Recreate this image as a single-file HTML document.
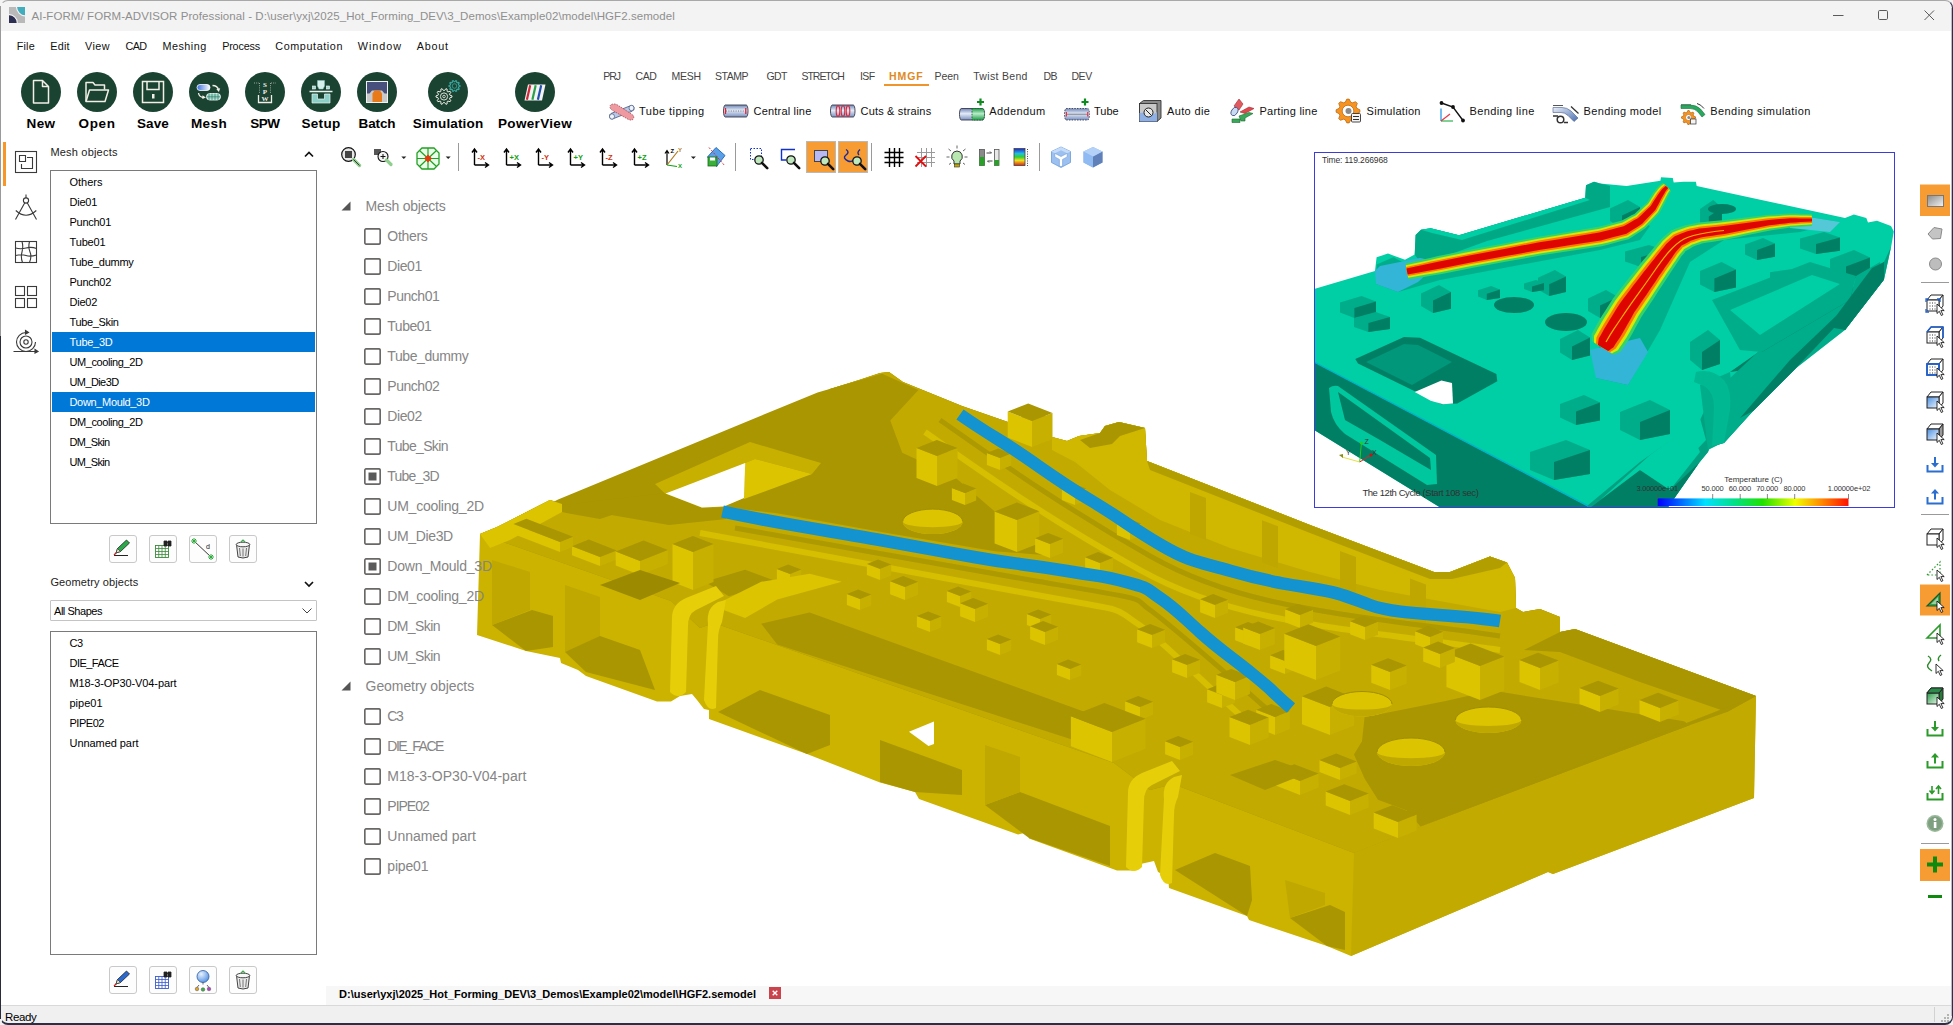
<!DOCTYPE html>
<html lang="en"><head><meta charset="utf-8"><title>AI-FORM/ FORM-ADVISOR Professional</title>
<style>
html,body{margin:0;padding:0}
body{width:1953px;height:1025px;overflow:hidden;background:#fff;font-family:"Liberation Sans",sans-serif;position:relative}
#app{position:absolute;left:0;top:0;width:1953px;height:1025px;overflow:hidden;background:#fff}
.bigc{position:absolute;width:40px;height:40px;border-radius:50%;background:#1b4332}
.lb{position:absolute;border:1px solid #7a7a7a;background:#fff}
.sb{position:absolute;width:25.5px;height:25.5px;border:1px solid #c9c9c9;border-radius:3px;background:#fdfdfd}
</style></head>
<body><div id="app">
<!-- sec_top -->
<div id="titlebar" style="position:absolute;left:0;top:0;width:1953px;height:31px;background:#f3f3f3"></div>
<svg style="position:absolute;left:9px;top:7px" width="16" height="16" viewBox="0 0 16 16">
<rect x="0" y="0" width="16" height="16" fill="#b9b9b9"/>
<path d="M7.500 -1H17V9A9.500 9.500 0 0 1 7.500 -1Z" fill="#41adbd" stroke="#f3f3f3" stroke-width="1.200"/>
<path d="M-1 7.800A8.200 8.200 0 0 1 8.200 17H-1Z" fill="#2c2f52" stroke="#f3f3f3" stroke-width="1.200"/>
</svg>
<span style="position:absolute;left:31.4px;top:11.27px;font-size:11.5px;line-height:11.5px;color:#8f8f8f;letter-spacing:0.078px;white-space:pre;">AI-FORM/ FORM-ADVISOR Professional - D:\user\yxj\2025_Hot_Forming_DEV\3_Demos\Example02\model\HGF2.semodel</span>
<svg style="position:absolute;left:1820px;top:0" width="133" height="31" viewBox="0 0 133 31" fill="none" stroke="#5a5a5a" stroke-width="1">
<path d="M13 15.5H23.5"/>
<rect x="58.5" y="10.5" width="9" height="9" rx="1.2"/>
<path d="M104.5 10.5L114 20M114 10.5L104.5 20"/>
</svg>
<span style="position:absolute;left:16.8px;top:40.76px;font-size:10.8px;line-height:10.8px;color:#111;letter-spacing:0.149px;white-space:pre;">File</span>
<span style="position:absolute;left:50.2px;top:40.76px;font-size:10.8px;line-height:10.8px;color:#111;letter-spacing:0.272px;white-space:pre;">Edit</span>
<span style="position:absolute;left:85.0px;top:40.76px;font-size:10.8px;line-height:10.8px;color:#111;letter-spacing:0.447px;white-space:pre;">View</span>
<span style="position:absolute;left:125.4px;top:40.76px;font-size:10.8px;line-height:10.8px;color:#111;letter-spacing:-0.534px;white-space:pre;">CAD</span>
<span style="position:absolute;left:162.4px;top:40.76px;font-size:10.8px;line-height:10.8px;color:#111;letter-spacing:0.511px;white-space:pre;">Meshing</span>
<span style="position:absolute;left:222.2px;top:40.76px;font-size:10.8px;line-height:10.8px;color:#111;letter-spacing:-0.188px;white-space:pre;">Process</span>
<span style="position:absolute;left:275.3px;top:40.76px;font-size:10.8px;line-height:10.8px;color:#111;letter-spacing:0.588px;white-space:pre;">Computation</span>
<span style="position:absolute;left:357.7px;top:40.76px;font-size:10.8px;line-height:10.8px;color:#111;letter-spacing:1.015px;white-space:pre;">Window</span>
<span style="position:absolute;left:416.8px;top:40.76px;font-size:10.8px;line-height:10.8px;color:#111;letter-spacing:0.735px;white-space:pre;">About</span>
<div class="bigc" style="left:21px;top:72px"></div>
<span style="position:absolute;left:26.6px;top:116.57px;font-size:13.5px;line-height:13.5px;font-weight:700;color:#000;letter-spacing:0.314px;white-space:pre;">New</span>
<div class="bigc" style="left:77px;top:72px"></div>
<span style="position:absolute;left:78.5px;top:116.57px;font-size:13.5px;line-height:13.5px;font-weight:700;color:#000;letter-spacing:0.625px;white-space:pre;">Open</span>
<div class="bigc" style="left:133px;top:72px"></div>
<span style="position:absolute;left:137.0px;top:116.57px;font-size:13.5px;line-height:13.5px;font-weight:700;color:#000;letter-spacing:0.118px;white-space:pre;">Save</span>
<div class="bigc" style="left:189px;top:72px"></div>
<span style="position:absolute;left:191.0px;top:116.57px;font-size:13.5px;line-height:13.5px;font-weight:700;color:#000;letter-spacing:0.373px;white-space:pre;">Mesh</span>
<div class="bigc" style="left:245px;top:72px"></div>
<span style="position:absolute;left:250.2px;top:116.57px;font-size:13.5px;line-height:13.5px;font-weight:700;color:#000;letter-spacing:-0.417px;white-space:pre;">SPW</span>
<div class="bigc" style="left:301px;top:72px"></div>
<span style="position:absolute;left:301.5px;top:116.57px;font-size:13.5px;line-height:13.5px;font-weight:700;color:#000;letter-spacing:0.300px;white-space:pre;">Setup</span>
<div class="bigc" style="left:357px;top:72px"></div>
<span style="position:absolute;left:358.5px;top:116.57px;font-size:13.5px;line-height:13.5px;font-weight:700;color:#000;letter-spacing:-0.102px;white-space:pre;">Batch</span>
<div class="bigc" style="left:428px;top:72px"></div>
<span style="position:absolute;left:412.8px;top:116.57px;font-size:13.5px;line-height:13.5px;font-weight:700;color:#000;letter-spacing:0.150px;white-space:pre;">Simulation</span>
<div class="bigc" style="left:515px;top:72px"></div>
<span style="position:absolute;left:498.0px;top:116.57px;font-size:13.5px;line-height:13.5px;font-weight:700;color:#000;letter-spacing:0.330px;white-space:pre;">PowerView</span>
<span style="position:absolute;left:603.3px;top:70.91px;font-size:10.5px;line-height:10.5px;color:#444;letter-spacing:-1.112px;white-space:pre;">PRJ</span>
<span style="position:absolute;left:635.6px;top:70.91px;font-size:10.5px;line-height:10.5px;color:#444;letter-spacing:-0.490px;white-space:pre;">CAD</span>
<span style="position:absolute;left:671.4px;top:70.91px;font-size:10.5px;line-height:10.5px;color:#444;letter-spacing:-0.234px;white-space:pre;">MESH</span>
<span style="position:absolute;left:715.1px;top:70.91px;font-size:10.5px;line-height:10.5px;color:#444;letter-spacing:-0.478px;white-space:pre;">STAMP</span>
<span style="position:absolute;left:766.4px;top:70.91px;font-size:10.5px;line-height:10.5px;color:#444;letter-spacing:-0.588px;white-space:pre;">GDT</span>
<span style="position:absolute;left:801.5px;top:70.91px;font-size:10.5px;line-height:10.5px;color:#444;letter-spacing:-1.040px;white-space:pre;">STRETCH</span>
<span style="position:absolute;left:859.9px;top:70.91px;font-size:10.5px;line-height:10.5px;color:#444;letter-spacing:-0.545px;white-space:pre;">ISF</span>
<span style="position:absolute;left:934.5px;top:70.91px;font-size:10.5px;line-height:10.5px;color:#444;letter-spacing:-0.031px;white-space:pre;">Peen</span>
<span style="position:absolute;left:973.2px;top:70.91px;font-size:10.5px;line-height:10.5px;color:#444;letter-spacing:0.314px;white-space:pre;">Twist Bend</span>
<span style="position:absolute;left:1043.4px;top:70.91px;font-size:10.5px;line-height:10.5px;color:#444;letter-spacing:-0.493px;white-space:pre;">DB</span>
<span style="position:absolute;left:1071.4px;top:70.91px;font-size:10.5px;line-height:10.5px;color:#444;letter-spacing:-0.397px;white-space:pre;">DEV</span>
<span style="position:absolute;left:889.0px;top:70.91px;font-size:10.5px;line-height:10.5px;font-weight:700;color:#e08a1e;letter-spacing:0.947px;white-space:pre;">HMGF</span>
<div style="position:absolute;left:884px;top:84px;width:45px;height:2px;background:#f0952b"></div>
<span style="position:absolute;left:639.1px;top:105.99px;font-size:11px;line-height:11px;color:#111;letter-spacing:0.455px;white-space:pre;">Tube tipping</span>
<span style="position:absolute;left:753.5px;top:105.99px;font-size:11px;line-height:11px;color:#111;letter-spacing:0.197px;white-space:pre;">Central line</span>
<span style="position:absolute;left:860.6px;top:105.99px;font-size:11px;line-height:11px;color:#111;letter-spacing:0.160px;white-space:pre;">Cuts &amp; strains</span>
<span style="position:absolute;left:989.3px;top:105.99px;font-size:11px;line-height:11px;color:#111;letter-spacing:0.387px;white-space:pre;">Addendum</span>
<span style="position:absolute;left:1094.0px;top:105.99px;font-size:11px;line-height:11px;color:#111;letter-spacing:0.009px;white-space:pre;">Tube</span>
<span style="position:absolute;left:1167.1px;top:105.99px;font-size:11px;line-height:11px;color:#111;letter-spacing:0.330px;white-space:pre;">Auto die</span>
<span style="position:absolute;left:1259.5px;top:105.99px;font-size:11px;line-height:11px;color:#111;letter-spacing:0.247px;white-space:pre;">Parting line</span>
<span style="position:absolute;left:1366.6px;top:105.99px;font-size:11px;line-height:11px;color:#111;letter-spacing:0.274px;white-space:pre;">Simulation</span>
<span style="position:absolute;left:1469.5px;top:105.99px;font-size:11px;line-height:11px;color:#111;letter-spacing:0.388px;white-space:pre;">Bending line</span>
<span style="position:absolute;left:1583.5px;top:105.99px;font-size:11px;line-height:11px;color:#111;letter-spacing:0.363px;white-space:pre;">Bending model</span>
<span style="position:absolute;left:1710.3px;top:105.99px;font-size:11px;line-height:11px;color:#111;letter-spacing:0.414px;white-space:pre;">Bending simulation</span>
<!-- sec_left -->
<div style="position:absolute;left:3px;top:142px;width:3px;height:44px;background:#f7972a"></div>
<svg style="position:absolute;left:12px;top:148px" width="30" height="212" viewBox="12 148 30 212" fill="none" stroke="#3a3a3a" stroke-width="1.1">
<rect x="15.5" y="151.5" width="21" height="21"/>
<path d="M19.5 155.5h6v6h-6z M27 157.5h5.5v11h-11v-4.5"/>
<circle cx="26" cy="200.5" r="2.6"/><path d="M26 194.5v3.4 M24.8 202.8L15.5 219.5 M27.2 202.8L36.5 219.5 M15.8 210.5Q26 220 36.3 210.5"/>
<rect x="15.5" y="241.5" width="21" height="21"/>
<path d="M22 241.5q1.5 5 0 10.500t0.500 10.500 M29.500 241.5q-1.500 6 0.500 10.500t-0.500 10.500 M15.5 248q5 1.500 10.500 0t10.500 0.500 M15.5 255.500q6 -1.500 10.500 0t10.500 -0.500"/>
<rect x="15.5" y="286.5" width="9" height="9"/><rect x="27.5" y="286.5" width="9" height="9"/><rect x="15.5" y="298.5" width="9" height="9"/><rect x="27.5" y="298.5" width="9" height="9"/>
<circle cx="26" cy="342" r="2.2"/><circle cx="26" cy="342" r="6"/><path d="M26 332.500a9.500 9.500 0 1 0 9.500 9.500 M13.5 351.5h23.500"/>
<path d="M25.500 330.500l3 2l-3 1.500z M35 349.500l3 2l-3 1.500z" fill="#3a3a3a"/>
</svg>
<span style="position:absolute;left:50.4px;top:146.69px;font-size:11px;line-height:11px;color:#222;letter-spacing:0.199px;white-space:pre;">Mesh objects</span>
<svg style="position:absolute;left:303px;top:149px" width="12" height="10" viewBox="0 0 12 10"><path d="M2 7.500L6 3.500L10 7.500" fill="none" stroke="#111" stroke-width="1.700"/></svg>
<div class="lb" style="left:50px;top:170px;width:265px;height:352px"></div>
<span style="position:absolute;left:69.5px;top:177.39px;font-size:11px;line-height:11px;color:#000;letter-spacing:-0.002px;white-space:pre;">Others</span>
<span style="position:absolute;left:69.5px;top:197.39px;font-size:11px;line-height:11px;color:#000;letter-spacing:-0.248px;white-space:pre;">Die01</span>
<span style="position:absolute;left:69.5px;top:217.39px;font-size:11px;line-height:11px;color:#000;letter-spacing:-0.275px;white-space:pre;">Punch01</span>
<span style="position:absolute;left:69.5px;top:237.39px;font-size:11px;line-height:11px;color:#000;letter-spacing:-0.150px;white-space:pre;">Tube01</span>
<span style="position:absolute;left:69.5px;top:257.39px;font-size:11px;line-height:11px;color:#000;letter-spacing:-0.284px;white-space:pre;">Tube_dummy</span>
<span style="position:absolute;left:69.5px;top:277.39px;font-size:11px;line-height:11px;color:#000;letter-spacing:-0.275px;white-space:pre;">Punch02</span>
<span style="position:absolute;left:69.5px;top:297.39px;font-size:11px;line-height:11px;color:#000;letter-spacing:-0.248px;white-space:pre;">Die02</span>
<span style="position:absolute;left:69.5px;top:317.39px;font-size:11px;line-height:11px;color:#000;letter-spacing:-0.353px;white-space:pre;">Tube_Skin</span>
<div style="position:absolute;left:52px;top:332px;width:263px;height:20px;background:#0078d7"></div>
<span style="position:absolute;left:69.5px;top:337.39px;font-size:11px;line-height:11px;color:#fff;letter-spacing:-0.263px;white-space:pre;">Tube_3D</span>
<span style="position:absolute;left:69.5px;top:357.39px;font-size:11px;line-height:11px;color:#000;letter-spacing:-0.405px;white-space:pre;">UM_cooling_2D</span>
<span style="position:absolute;left:69.5px;top:377.39px;font-size:11px;line-height:11px;color:#000;letter-spacing:-0.599px;white-space:pre;">UM_Die3D</span>
<div style="position:absolute;left:52px;top:392px;width:263px;height:20px;background:#0078d7"></div>
<span style="position:absolute;left:69.5px;top:397.39px;font-size:11px;line-height:11px;color:#fff;letter-spacing:-0.337px;white-space:pre;">Down_Mould_3D</span>
<span style="position:absolute;left:69.5px;top:417.39px;font-size:11px;line-height:11px;color:#000;letter-spacing:-0.405px;white-space:pre;">DM_cooling_2D</span>
<span style="position:absolute;left:69.5px;top:437.39px;font-size:11px;line-height:11px;color:#000;letter-spacing:-0.660px;white-space:pre;">DM_Skin</span>
<span style="position:absolute;left:69.5px;top:457.39px;font-size:11px;line-height:11px;color:#000;letter-spacing:-0.660px;white-space:pre;">UM_Skin</span>
<div class="sb" style="left:109px;top:535px"></div>
<div class="sb" style="left:149px;top:535px"></div>
<div class="sb" style="left:189px;top:535px"></div>
<div class="sb" style="left:229px;top:535px"></div>
<span style="position:absolute;left:50.4px;top:576.69px;font-size:11px;line-height:11px;color:#222;letter-spacing:0.112px;white-space:pre;">Geometry objects</span>
<svg style="position:absolute;left:303px;top:579px" width="12" height="10" viewBox="0 0 12 10"><path d="M2 3L6 7L10 3" fill="none" stroke="#111" stroke-width="1.700"/></svg>
<div style="position:absolute;left:50px;top:600px;width:265px;height:18.5px;border:1px solid #c4c4c4;background:#fff;border-radius:1px"></div>
<span style="position:absolute;left:54.0px;top:605.69px;font-size:11px;line-height:11px;color:#000;letter-spacing:-0.459px;white-space:pre;">All Shapes</span>
<svg style="position:absolute;left:301px;top:606px" width="12" height="10" viewBox="0 0 12 10"><path d="M1.500 2.500L6 7L10.500 2.500" fill="none" stroke="#444" stroke-width="1"/></svg>
<div class="lb" style="left:50px;top:631px;width:265px;height:322px"></div>
<span style="position:absolute;left:69.5px;top:638.39px;font-size:11px;line-height:11px;color:#000;letter-spacing:-0.531px;white-space:pre;">C3</span>
<span style="position:absolute;left:69.5px;top:658.39px;font-size:11px;line-height:11px;color:#000;letter-spacing:-0.523px;white-space:pre;">DIE_FACE</span>
<span style="position:absolute;left:69.5px;top:678.39px;font-size:11px;line-height:11px;color:#000;letter-spacing:-0.096px;white-space:pre;">M18-3-OP30-V04-part</span>
<span style="position:absolute;left:69.5px;top:698.39px;font-size:11px;line-height:11px;color:#000;letter-spacing:-0.005px;white-space:pre;">pipe01</span>
<span style="position:absolute;left:69.5px;top:718.39px;font-size:11px;line-height:11px;color:#000;letter-spacing:-0.467px;white-space:pre;">PIPE02</span>
<span style="position:absolute;left:69.5px;top:738.39px;font-size:11px;line-height:11px;color:#000;letter-spacing:-0.059px;white-space:pre;">Unnamed part</span>
<div class="sb" style="left:109px;top:966px"></div>
<div class="sb" style="left:149px;top:966px"></div>
<div class="sb" style="left:189px;top:966px"></div>
<div class="sb" style="left:229px;top:966px"></div>
<!-- sec_model -->
<svg id="model" style="position:absolute;left:326px;top:140px" width="1589" height="843" viewBox="326 140 1589 843">
<polygon points="480,534.0 497,527.0 550,500.0 562,504.0 679,452.0 817,398.0 830,389.0 859,380.0 880,373.0 889,372.0 903,382.0 962,406.0 1008,422.0 1032,413.0 1051,417.0 1052,437.0 1067,441.0 1079,436.0 1100,433.0 1105,426.0 1119,422.0 1145,428.0 1147,461.0 1310,525.0 1434,572.0 1450,572.0 1490,556.5 1507,562.5 1515,578.0 1516,608.0 1523,612.0 1540,609.0 1560,617.0 1560,632.0 1575,629.0 1756,696.0 1754,798.0 1553,874.0 1548,872.0 1351,956.0 1327,946.0 1249,920.0 1247,916.0 1169,888.0 1168,877.0 1158,872.0 1154,861.0 1136,865.0 1133,870.5 1117,870.5 1029,838.5 1028,832.0 1018,834.5 919,799.0 915,792.0 880,782.6 807,754.0 709,719.0 709,710.0 704,709.0 697,700.0 692,694.0 680,696.0 671,701.5 657,701.5 586,676.0 578,670.0 561,663.0 560,658.0 526,651.0 477,635" fill="#ccb300"/>
<polygon points="480,534.0 497,527.0 550,500.0 562,504.0 679,452.0 817,398.0 830,389.0 859,380.0 880,373.0 889,372.0 903,382.0 962,406.0 1008,422.0 1032,413.0 1051,417.0 1052,437.0 1067,441.0 1079,436.0 1100,433.0 1105,426.0 1119,422.0 1145,428.0 1147,461.0 1310,525.0 1434,572.0 1450,572.0 1490,556.5 1507,562.5 1515,578.0 1516,608.0 1523,612.0 1540,609.0 1560,617.0 1560,632.0 1575,629.0 1756,696.0 1354,853.0 1173,784.0 1150,790.0 1114,763.0 714,623.0 700,628.0 671,601" fill="#a99600"/>
<polygon points="1354,853.0 1756,696.0 1754,798.0 1553,874.0 1548,872.0 1351,956" fill="#c2aa00"/>
<g id="top-features">
<polygon points="480,534.0 497,527.0 550,500.0 562,504.0 679,452.0 817,398.0 830,389.0 859,380.0 880,373.0 889,372.0 903,382.0 962,406.0 1008,422.0 1032,413.0 1051,417.0 1052,437.0 1067,441.0 1079,436.0 1100,433.0 1105,426.0 1119,422.0 1145,428.0 1147,461.0 1310,525.0 1434,572.0 1450,572.0 1490,556.5 1507,562.5 1515,578.0 1516,608.0 1523,612.0 1540,609.0 1560,617.0 1560,632.0 1575,629.0 1756,696.0 1354,853.0 1173,784.0 1150,790.0 1114,763.0 714,623.0 700,628.0 671,601" fill="#c2aa00"/>
<polygon points="542,507.6 558.1,499.6 817.6,392.4 882.1,373.8 918.4,390.0 890.2,420.6 902.2,452.8 954.6,477.0 1011,525.4 1055.4,556.0 994.9,551.2 890.2,533.4 777.3,513.3 720.9,506.8 672.6,494.7 600,518.9 567.8,513.3" fill="#a99600"/>
<polygon points="562,505.0 665,493.0 702,508.0 724,507.0 726,519.0 669,525.0 600,513" fill="#a99600"/>
<polygon points="1524,650.0 1560,632.0 1575,629.0 1756,696.0 1727,712.0 1640,682.0 1560,652" fill="#a99600"/>
<polygon points="1364.6,717.2 1444.5,701.3 1492.4,690.6 1567,702.6 1684,721.2 1689.5,725.2 1420.5,826.4 1407,810.4 1378,799.8 1364.6,778.5 1354,754.5 1362,741.2" fill="#a99600"/>
<polygon points="1689.5,725.2 1727,712.0 1756,696.0 1420.5,826.4" fill="#a99600"/>
<polygon points="761.2,623.7 809.6,612.4 1103.7,718.8 1087.6,744.6 777.3,644.6" fill="#a99600"/>
<polygon points="704.8,581.8 745.1,569.7 777.3,581.8 729,596.3" fill="#a99600"/>
<polygon points="1052,437.0 1067,441.0 1079,436.0 1100,433.0 1105,426.0 1119,422.0 1145,428.0 1147,461.0 1310,525.0 1434,572.0 1450,572.0 1490,556.5 1507,562.5 1515,578.0 1516,608.0 1500,612.0 1434,600.0 1380,590.0 1310,572.0 1230,548.0 1160,520.0 1110,490.0 1075,462.0 1052,450" fill="#d0b800"/>
<polygon points="1147,461.0 1310,525.0 1434,572.0 1450,572.0 1490,556.5 1507,562.5 1500,568.0 1452,579.0 1430,579.0 1310,533.0 1150,470" fill="#b39e00"/>
<polygon points="1080,440.0 1100,433.0 1105,426.0 1119,422.0 1145,428.0 1120,436.0 1112,444.0 1090,448" fill="#a99600"/>
<polygon points="1190,491.9 1206,497.9 1206,539.9 1190,533.9" fill="#bfa700"/>
<polygon points="1262,520.3 1278,526.3 1278,568.3 1262,562.3" fill="#bfa700"/>
<polygon points="1340,551.0 1356,557.0 1356,599.0 1340,593" fill="#bfa700"/>
<polygon points="1410,578.6 1426,584.6 1426,626.6 1410,620.6" fill="#bfa700"/>
<path d="M735 528C800 540 900 558 1030 580S1130 596 1150 610S1220 668 1282 722" fill="none" stroke="#ad9900" stroke-width="5"/>
<path d="M700 533C800 552 900 570 1020 592S1110 606 1135 622S1200 680 1262 735" fill="none" stroke="#d6be00" stroke-width="6"/>
<path d="M940 420C1000 462 1060 505 1150 556S1330 612 1500 636" fill="none" stroke="#ad9900" stroke-width="5"/>
<path d="M925 432C990 478 1050 520 1140 570S1320 626 1500 650" fill="none" stroke="#d6be00" stroke-width="6"/>
<polygon points="937,486.0 916.5,478.1 916.5,448.1 937,456" fill="#dcc400"/><polygon points="937,486.0 957.5,477.9 957.5,447.9 937,456" fill="#c8b000"/><polygon points="937,456.0 916.5,448.1 936.9,440.0 957.5,447.9" fill="#a99600"/>
<polygon points="1017,552.0 994.6,543.4 994.6,511.4 1017,520" fill="#dcc400"/><polygon points="1017,552.0 1039.3,543.2 1039.3,511.2 1017,520" fill="#c8b000"/><polygon points="1017,520.0 994.6,511.4 1016.9,502.5 1039.3,511.2" fill="#a99600"/>
<polygon points="965,505.0 951.9,500.0 951.9,488.0 965,493" fill="#dcc400"/><polygon points="965,505.0 976.2,500.6 976.2,488.6 965,493" fill="#c8b000"/><polygon points="965,493.0 951.9,488.0 963.1,483.5 976.2,488.6" fill="#a99600"/>
<polygon points="1050,558.0 1035.1,552.2 1035.1,538.2 1050,544" fill="#dcc400"/><polygon points="1050,558.0 1063,552.8 1063,538.8 1050,544" fill="#c8b000"/><polygon points="1050,544.0 1035.1,538.2 1048.1,533.1 1063,538.8" fill="#a99600"/>
<polygon points="1100,575.0 1085.1,569.2 1085.1,557.2 1100,563" fill="#dcc400"/><polygon points="1100,575.0 1113,569.8 1113,557.8 1100,563" fill="#c8b000"/><polygon points="1100,563.0 1085.1,557.2 1098.1,552.1 1113,557.8" fill="#a99600"/>
<polygon points="1032,447.0 1007.7,437.6 1007.7,411.6 1032,421" fill="#dcc400"/><polygon points="1032,447.0 1052.5,438.9 1052.5,412.9 1032,421" fill="#c8b000"/><polygon points="1032,421.0 1007.7,411.6 1028.2,403.5 1052.5,412.9" fill="#a99600"/>
<polygon points="1000,470.0 986.9,465.0 986.9,453.0 1000,458" fill="#dcc400"/><polygon points="1000,470.0 1011.2,465.6 1011.2,453.6 1000,458" fill="#c8b000"/><polygon points="1000,458.0 986.9,453.0 998.1,448.5 1011.2,453.6" fill="#a99600"/>
<polygon points="1075,505.0 1061.9,500.0 1061.9,488.0 1075,493" fill="#dcc400"/><polygon points="1075,505.0 1086.2,500.6 1086.2,488.6 1075,493" fill="#c8b000"/><polygon points="1075,493.0 1061.9,488.0 1073.1,483.5 1086.2,488.6" fill="#a99600"/>
<polygon points="1130,540.0 1116.9,535.0 1116.9,523.0 1130,528" fill="#dcc400"/><polygon points="1130,540.0 1141.2,535.6 1141.2,523.6 1130,528" fill="#c8b000"/><polygon points="1130,528.0 1116.9,523.0 1128.1,518.5 1141.2,523.6" fill="#a99600"/>
<polygon points="480,534.0 497,527.0 550,500.0 562,504.0 562,512.0 540,524.0 510,540.0 490,548" fill="#dcc400"/>
<polygon points="560,552.0 513.4,534.0 513.4,524.0 560,542" fill="#dcc400"/><polygon points="560,552.0 573,546.8 573,536.8 560,542" fill="#c8b000"/><polygon points="560,542.0 513.4,524.0 526.4,518.8 573,536.8" fill="#a99600"/>
<polygon points="600,566.0 572,555.2 572,546.2 600,557" fill="#dcc400"/><polygon points="600,566.0 616.7,559.4 616.7,550.4 600,557" fill="#c8b000"/><polygon points="600,557.0 572,546.2 588.8,539.6 616.7,550.4" fill="#a99600"/>
<polygon points="640,575.0 615.7,565.6 615.7,551.6 640,561" fill="#dcc400"/><polygon points="640,575.0 667.9,564.0 667.9,550.0 640,561" fill="#c8b000"/><polygon points="640,561.0 615.7,551.6 643.6,540.6 667.9,550" fill="#a99600"/>
<polygon points="693,590.0 672.5,582.1 672.5,544.1 693,552" fill="#dcc400"/><polygon points="693,590.0 713.5,581.9 713.5,543.9 693,552" fill="#c8b000"/><polygon points="693,552.0 672.5,544.1 692.9,536.0 713.5,543.9" fill="#a99600"/>
<polygon points="600,585.0 640,570.0 680,583.0 640,600" fill="#9c8a00"/>
<polygon points="790,585.0 776.9,580.0 776.9,569.0 790,574" fill="#dcc400"/><polygon points="790,585.0 801.2,580.6 801.2,569.6 790,574" fill="#c8b000"/><polygon points="790,574.0 776.9,569.0 788.1,564.5 801.2,569.6" fill="#a99600"/>
<polygon points="860,610.0 846.9,605.0 846.9,594.0 860,599" fill="#dcc400"/><polygon points="860,610.0 871.2,605.6 871.2,594.6 860,599" fill="#c8b000"/><polygon points="860,599.0 846.9,594.0 858.1,589.5 871.2,594.6" fill="#a99600"/>
<polygon points="930,632.0 916.9,627.0 916.9,616.0 930,621" fill="#dcc400"/><polygon points="930,632.0 941.2,627.6 941.2,616.6 930,621" fill="#c8b000"/><polygon points="930,621.0 916.9,616.0 928.1,611.5 941.2,616.6" fill="#a99600"/>
<polygon points="1000,655.0 986.9,650.0 986.9,639.0 1000,644" fill="#dcc400"/><polygon points="1000,655.0 1011.2,650.6 1011.2,639.6 1000,644" fill="#c8b000"/><polygon points="1000,644.0 986.9,639.0 998.1,634.5 1011.2,639.6" fill="#a99600"/>
<polygon points="1070,680.0 1056.9,675.0 1056.9,664.0 1070,669" fill="#dcc400"/><polygon points="1070,680.0 1081.2,675.6 1081.2,664.6 1070,669" fill="#c8b000"/><polygon points="1070,669.0 1056.9,664.0 1068.1,659.5 1081.2,664.6" fill="#a99600"/>
<polygon points="880,580.0 866.9,575.0 866.9,564.0 880,569" fill="#dcc400"/><polygon points="880,580.0 891.2,575.6 891.2,564.6 880,569" fill="#c8b000"/><polygon points="880,569.0 866.9,564.0 878.1,559.5 891.2,564.6" fill="#a99600"/>
<polygon points="960,607.0 946.9,602.0 946.9,591.0 960,596" fill="#dcc400"/><polygon points="960,607.0 971.2,602.6 971.2,591.6 960,596" fill="#c8b000"/><polygon points="960,596.0 946.9,591.0 958.1,586.5 971.2,591.6" fill="#a99600"/>
<polygon points="1040,630.0 1026.9,625.0 1026.9,614.0 1040,619" fill="#dcc400"/><polygon points="1040,630.0 1051.2,625.6 1051.2,614.6 1040,619" fill="#c8b000"/><polygon points="1040,619.0 1026.9,614.0 1038.1,609.5 1051.2,614.6" fill="#a99600"/>
<polygon points="1152,648.0 1137.1,642.2 1137.1,629.2 1152,635" fill="#dcc400"/><polygon points="1152,648.0 1165,642.8 1165,629.8 1152,635" fill="#c8b000"/><polygon points="1152,635.0 1137.1,629.2 1150.1,624.1 1165,629.8" fill="#a99600"/>
<polygon points="1187,678.0 1172.1,672.2 1172.1,659.2 1187,665" fill="#dcc400"/><polygon points="1187,678.0 1200,672.8 1200,659.8 1187,665" fill="#c8b000"/><polygon points="1187,665.0 1172.1,659.2 1185.1,654.1 1200,659.8" fill="#a99600"/>
<polygon points="1222,708.0 1207.1,702.2 1207.1,689.2 1222,695" fill="#dcc400"/><polygon points="1222,708.0 1235,702.8 1235,689.8 1222,695" fill="#c8b000"/><polygon points="1222,695.0 1207.1,689.2 1220.1,684.1 1235,689.8" fill="#a99600"/>
<polygon points="1215,618.0 1200.1,612.2 1200.1,599.2 1215,605" fill="#dcc400"/><polygon points="1215,618.0 1228,612.8 1228,599.8 1215,605" fill="#c8b000"/><polygon points="1215,605.0 1200.1,599.2 1213.1,594.1 1228,599.8" fill="#a99600"/>
<polygon points="1250,646.0 1235.1,640.2 1235.1,627.2 1250,633" fill="#dcc400"/><polygon points="1250,646.0 1263,640.8 1263,627.8 1250,633" fill="#c8b000"/><polygon points="1250,633.0 1235.1,627.2 1248.1,622.1 1263,627.8" fill="#a99600"/>
<polygon points="1285,674.0 1270.1,668.2 1270.1,655.2 1285,661" fill="#dcc400"/><polygon points="1285,674.0 1298,668.8 1298,655.8 1285,661" fill="#c8b000"/><polygon points="1285,661.0 1270.1,655.2 1283.1,650.1 1298,655.8" fill="#a99600"/>
<polygon points="1300,628.0 1285.1,622.2 1285.1,609.2 1300,615" fill="#dcc400"/><polygon points="1300,628.0 1313,622.8 1313,609.8 1300,615" fill="#c8b000"/><polygon points="1300,615.0 1285.1,609.2 1298.1,604.1 1313,609.8" fill="#a99600"/>
<polygon points="1365,640.0 1350.1,634.2 1350.1,621.2 1365,627" fill="#dcc400"/><polygon points="1365,640.0 1378,634.8 1378,621.8 1365,627" fill="#c8b000"/><polygon points="1365,627.0 1350.1,621.2 1363.1,616.1 1378,621.8" fill="#a99600"/>
<polygon points="1430,650.0 1415.1,644.2 1415.1,631.2 1430,637" fill="#dcc400"/><polygon points="1430,650.0 1443,644.8 1443,631.8 1430,637" fill="#c8b000"/><polygon points="1430,637.0 1415.1,631.2 1428.1,626.1 1443,631.8" fill="#a99600"/>
<polygon points="1180,760.0 1165.1,754.2 1165.1,741.2 1180,747" fill="#dcc400"/><polygon points="1180,760.0 1193,754.8 1193,741.8 1180,747" fill="#c8b000"/><polygon points="1180,747.0 1165.1,741.2 1178.1,736.1 1193,741.8" fill="#a99600"/>
<polygon points="1140,720.0 1125.1,714.2 1125.1,701.2 1140,707" fill="#dcc400"/><polygon points="1140,720.0 1153,714.8 1153,701.8 1140,707" fill="#c8b000"/><polygon points="1140,707.0 1125.1,701.2 1138.1,696.1 1153,701.8" fill="#a99600"/>
<polygon points="905,600.0 890.1,594.2 890.1,581.2 905,587" fill="#dcc400"/><polygon points="905,600.0 918,594.8 918,581.8 905,587" fill="#c8b000"/><polygon points="905,587.0 890.1,581.2 903.1,576.1 918,581.8" fill="#a99600"/>
<polygon points="975,622.0 960.1,616.2 960.1,603.2 975,609" fill="#dcc400"/><polygon points="975,622.0 988,616.8 988,603.8 975,609" fill="#c8b000"/><polygon points="975,609.0 960.1,603.2 973.1,598.1 988,603.8" fill="#a99600"/>
<polygon points="1045,645.0 1030.1,639.2 1030.1,626.2 1045,632" fill="#dcc400"/><polygon points="1045,645.0 1058,639.8 1058,626.8 1045,632" fill="#c8b000"/><polygon points="1045,632.0 1030.1,626.2 1043.1,621.1 1058,626.8" fill="#a99600"/>
<polygon points="1235,700.0 1216.3,692.8 1216.3,674.8 1235,682" fill="#dcc400"/><polygon points="1235,700.0 1249.9,694.1 1249.9,676.1 1235,682" fill="#c8b000"/><polygon points="1235,682.0 1216.3,674.8 1231.2,668.9 1249.9,676.1" fill="#a99600"/>
<polygon points="1275,735.0 1256.3,727.8 1256.3,709.8 1275,717" fill="#dcc400"/><polygon points="1275,735.0 1289.9,729.1 1289.9,711.1 1275,717" fill="#c8b000"/><polygon points="1275,717.0 1256.3,709.8 1271.2,703.9 1289.9,711.1" fill="#a99600"/>
<polygon points="712.8,606.0 761.2,581.8 809.6,573.7 841.8,581.8 777.3,599.5 745.1,618" fill="#dcc400"/>
<polygon points="1112,762.0 1070.9,746.2 1070.9,716.2 1112,732" fill="#dcc400"/><polygon points="1112,762.0 1145.5,748.8 1145.5,718.8 1112,732" fill="#c8b000"/><polygon points="1112,732.0 1070.9,716.2 1104.4,702.9 1145.5,718.8" fill="#a99600"/>
<polygon points="1316,680.0 1284.3,667.8 1284.3,633.8 1316,646" fill="#dcc400"/><polygon points="1316,680.0 1340.2,670.4 1340.2,636.4 1316,646" fill="#c8b000"/><polygon points="1316,646.0 1284.3,633.8 1308.5,624.2 1340.2,636.4" fill="#a99600"/>
<polygon points="1480,700.0 1446.4,687.0 1446.4,653.0 1480,666" fill="#dcc400"/><polygon points="1480,700.0 1504.2,690.4 1504.2,656.4 1480,666" fill="#c8b000"/><polygon points="1480,666.0 1446.4,653.0 1470.6,643.5 1504.2,656.4" fill="#a99600"/>
<polygon points="1390,690.0 1371.3,682.8 1371.3,664.8 1390,672" fill="#dcc400"/><polygon points="1390,690.0 1406.7,683.4 1406.7,665.4 1390,672" fill="#c8b000"/><polygon points="1390,672.0 1371.3,664.8 1388.1,658.2 1406.7,665.4" fill="#a99600"/>
<polygon points="1260,650.0 1243.2,643.5 1243.2,627.5 1260,634" fill="#dcc400"/><polygon points="1260,650.0 1274.9,644.1 1274.9,628.1 1260,634" fill="#c8b000"/><polygon points="1260,634.0 1243.2,627.5 1258.1,621.6 1274.9,628.1" fill="#a99600"/>
<polygon points="1440,668.0 1423.2,661.5 1423.2,647.5 1440,654" fill="#dcc400"/><polygon points="1440,668.0 1454.9,662.1 1454.9,648.1 1440,654" fill="#c8b000"/><polygon points="1440,654.0 1423.2,647.5 1438.1,641.6 1454.9,648.1" fill="#a99600"/>
<polygon points="1540,690.0 1519.5,682.1 1519.5,660.1 1540,668" fill="#dcc400"/><polygon points="1540,690.0 1558.6,682.6 1558.6,660.6 1540,668" fill="#c8b000"/><polygon points="1540,668.0 1519.5,660.1 1538.1,652.7 1558.6,660.6" fill="#a99600"/>
<polygon points="1600,712.0 1579.5,704.1 1579.5,688.1 1600,696" fill="#dcc400"/><polygon points="1600,712.0 1618.6,704.6 1618.6,688.6 1600,696" fill="#c8b000"/><polygon points="1600,696.0 1579.5,688.1 1598.1,680.7 1618.6,688.6" fill="#a99600"/>
<polygon points="1660,722.0 1639.5,714.1 1639.5,700.1 1660,708" fill="#dcc400"/><polygon points="1660,722.0 1678.6,714.6 1678.6,700.6 1660,708" fill="#c8b000"/><polygon points="1660,708.0 1639.5,700.1 1658.1,692.7 1678.6,700.6" fill="#a99600"/>
<polygon points="1330,735.0 1302,724.2 1302,696.2 1330,707" fill="#dcc400"/><polygon points="1330,735.0 1354.2,725.4 1354.2,697.4 1330,707" fill="#c8b000"/><polygon points="1330,707.0 1302,696.2 1326.2,686.6 1354.2,697.4" fill="#a99600"/>
<polygon points="1250,745.0 1229.5,737.1 1229.5,717.1 1250,725" fill="#dcc400"/><polygon points="1250,745.0 1268.6,737.6 1268.6,717.6 1250,725" fill="#c8b000"/><polygon points="1250,725.0 1229.5,717.1 1248.1,709.7 1268.6,717.6" fill="#a99600"/>
<polygon points="1398,838.0 1373.7,828.6 1373.7,812.6 1398,822" fill="#dcc400"/><polygon points="1398,838.0 1416.6,830.6 1416.6,814.6 1398,822" fill="#c8b000"/><polygon points="1398,822.0 1373.7,812.6 1392.3,805.3 1416.6,814.6" fill="#a99600"/>
<polygon points="1350,815.0 1325.7,805.6 1325.7,791.6 1350,801" fill="#dcc400"/><polygon points="1350,815.0 1368.6,807.6 1368.6,793.6 1350,801" fill="#c8b000"/><polygon points="1350,801.0 1325.7,791.6 1344.3,784.3 1368.6,793.6" fill="#a99600"/>
<polygon points="1300,795.0 1275.7,785.6 1275.7,771.6 1300,781" fill="#dcc400"/><polygon points="1300,795.0 1318.6,787.6 1318.6,773.6 1300,781" fill="#c8b000"/><polygon points="1300,781.0 1275.7,771.6 1294.3,764.3 1318.6,773.6" fill="#a99600"/>
<polygon points="1340,780.0 1319.5,772.1 1319.5,760.1 1340,768" fill="#dcc400"/><polygon points="1340,780.0 1356.7,773.4 1356.7,761.4 1340,768" fill="#c8b000"/><polygon points="1340,768.0 1319.5,760.1 1336.2,753.5 1356.7,761.4" fill="#a99600"/>
<polygon points="1230,775.0 1275,760.0 1310,772.0 1265,790" fill="#a99600"/>
<ellipse cx="932.7" cy="521.6" rx="30" ry="12.5" fill="#dcc400"/>
<path d="M902.7 521.6A30 12.5 0 0 0 962.7 521.6A30 5.6 0 0 1 902.7 521.6Z" fill="#bfa800"/>
<path d="M902.7 521.6A30 12.5 0 0 1 962.7 521.6" fill="none" stroke="#a08e00" stroke-width="1"/>
<ellipse cx="1362" cy="704" rx="30" ry="12.5" fill="#dcc400"/>
<path d="M1332 704A30 12.5 0 0 0 1392 704A30 5.6 0 0 1 1332 704Z" fill="#bfa800"/>
<path d="M1332 704A30 12.5 0 0 1 1392 704" fill="none" stroke="#a08e00" stroke-width="1"/>
<ellipse cx="1488.4" cy="720" rx="33" ry="13" fill="#dcc400"/>
<path d="M1455.4 720A33 13 0 0 0 1521.4 720A33 5.9 0 0 1 1455.4 720Z" fill="#bfa800"/>
<path d="M1455.4 720A33 13 0 0 1 1521.4 720" fill="none" stroke="#a08e00" stroke-width="1"/>
<ellipse cx="1411" cy="752" rx="34" ry="14" fill="#dcc400"/>
<path d="M1377 752A34 14 0 0 0 1445 752A34 6.3 0 0 1 1377 752Z" fill="#bfa800"/>
<path d="M1377 752A34 14 0 0 1 1445 752" fill="none" stroke="#a08e00" stroke-width="1"/>
<polygon points="655,484.0 750,442.0 821,463.0 812,474.0 755,459.0 745,463.0 744,498.0 724,506.0 702,507.5 665,493.5" fill="#c8b000"/>
<polygon points="745,463.0 755,459.0 812,474.0 744,499" fill="#dcc400"/>
<polygon points="665.6,493.5 745.2,463.0 744,498.0 724,506.4 701.9,507.5" fill="#fff"/>
<polygon points="909,731.7 934,721.6 934,744.0 928.5,746" fill="#fff"/>
</g>
<g id="front-features">
<polygon points="492,625.0 532,610.0 553,616.0 553,647.0 526,651" fill="#a99600"/>
<polygon points="492,560.0 530,572.0 530,610.0 492,625" fill="#c0a800"/>
<polygon points="565,585.0 600,597.0 600,640.0 565,652" fill="#c0a800"/>
<polygon points="565,652.0 600,636.0 640,650.0 655,690.0 586,672" fill="#a99600"/>
<polygon points="718,712.0 760,690.0 830,715.0 830,745.0 807,754" fill="#a99600"/>
<polygon points="880,740.0 962,770.0 962,795.0 915,792.0 880,782" fill="#a99600"/>
<polygon points="985,805.0 1020,792.0 1110,826.0 1110,866.0 1029,838" fill="#a99600"/>
<polygon points="1175,870.0 1215,853.0 1250,866.0 1252,900.0 1247,916" fill="#a99600"/>
<polygon points="1290,918.0 1330,905.0 1345,912.0 1345,950.0 1327,946" fill="#a99600"/>
<polygon points="985,745.0 1020,757.0 1020,792.0 985,805" fill="#c0a800"/>
<polygon points="1285,880.0 1325,893.0 1325,905.0 1290,918" fill="#c0a800"/>
<path d="M672 618Q672 604 686 598L716 586L724 596L696 610Q688 614 688 626L686 692Q678 700 670 692Z" fill="#e6cf08"/>
<path d="M708 624Q706 608 718 602L726 600L722 622Q718 630 718 640L716 708Q708 712 704 700Z" fill="#e6cf08"/>
<path d="M1128 793Q1128 779 1142 773L1172 761L1180 771L1152 785Q1144 789 1144 801L1142 867Q1134 875 1126 867Z" fill="#e6cf08"/>
<path d="M1164 799Q1162 783 1174 777L1182 775L1178 797Q1174 805 1174 815L1172 883Q1164 887 1160 875Z" fill="#e6cf08"/>
</g>
<path d="M960 414.500C985 432 1000 440 1020.500 453.700S1060 482 1091 500.500S1130 527 1161 545S1200 562 1231 571S1280 583 1310 588S1340 594 1370 605S1450 613 1500 621" fill="none" stroke="#1393d0" stroke-width="12.5" stroke-linecap="butt"/>
<path d="M722.500 511.500C780 524 830 531 880 540S930 549 974 557S1020 563 1067 571S1100 575 1126 582S1145 588 1160 598S1180 614 1200 632S1230 656 1253 674.500S1270 690 1291 708" fill="none" stroke="#1393d0" stroke-width="12.5" stroke-linecap="butt"/>
</svg>
<!-- sec_inset -->
<div id="inset" style="position:absolute;left:1314px;top:152px;width:579px;height:354px;border:1px solid #3c3cdc;background:#fff;overflow:hidden">
<svg style="position:absolute;left:0;top:0" width="579" height="354" viewBox="1315 153 579 354">
<defs><linearGradient id="lg" x1="0" x2="1" y1="0" y2="0"><stop offset="0" stop-color="#0000ff"/><stop offset="0.060" stop-color="#0030ff"/><stop offset="0.250" stop-color="#00e0ff"/><stop offset="0.400" stop-color="#00e08a"/><stop offset="0.550" stop-color="#20e000"/><stop offset="0.720" stop-color="#f0ff00"/><stop offset="0.850" stop-color="#ff9000"/><stop offset="1" stop-color="#ff1000"/></linearGradient></defs>
<polygon points="1314.0,289.0 1375.0,271.0 1376.6,257.2 1388.0,253.6 1405.0,259.8 1414.7,254.5 1415.6,235.0 1421.0,229.7 1430.7,228.2 1459.0,235.3 1585.2,197.7 1586.0,185.3 1594.0,181.7 1600.0,183.5 1626.6,186.0 1660.4,180.8 1661.0,177.3 1672.8,178.0 1673.7,182.6 1683.4,181.7 1695.9,181.7 1696.7,186.0 1845.0,218.0 1853.9,214.6 1866.3,218.0 1868.0,222.6 1877.0,220.8 1891.0,226.0 1893.8,231.4 1891.0,247.4 1884.0,279.4 1845.0,330.0 1834.0,328.0 1795.0,369.0 1760.0,404.0 1753.0,411.0 1724.0,443.0 1710.0,447.0 1708.0,452.0 1699.0,463.0 1667.5,508.0 1441.0,508.0 1314.0,430.0" fill="#00cea4"/>
<polygon points="1314.0,362.0 1587.0,506.0 1590.0,508.0 1441.0,508.0 1314.0,430.0" fill="#007f64"/>
<path d="M1314 362L1590 507" stroke="#00b4c8" stroke-width="1.500" fill="none"/>
<polygon points="1587.0,506.0 1640.0,462.0 1700.0,420.0 1712.0,395.0 1760.0,365.0 1800.0,330.0 1850.0,290.0 1884.0,262.0 1891.0,247.0 1884.0,279.4 1845.0,330.0 1834.0,328.0 1795.0,369.0 1760.0,404.0 1753.0,411.0 1724.0,443.0 1710.0,447.0 1708.0,452.0 1699.0,463.0 1667.5,508.0 1590.0,508.0" fill="#00a080"/>
<polygon points="1590.0,508.0 1640.0,470.0 1670.0,490.0 1699.0,463.0 1667.5,508.0" fill="#007f64"/>
<polygon points="1600.0,500.0 1650.0,455.0 1700.0,418.0 1706.0,440.0 1668.0,480.0 1640.0,470.0" fill="#00cea4"/>
<polygon points="1730.0,372.0 1790.0,330.0 1850.0,290.0 1884.0,262.0 1884.0,279.4 1845.0,330.0 1834.0,328.0 1795.0,369.0 1760.0,404.0 1753.0,411.0 1745.0,405.0 1790.0,360.0 1830.0,318.0 1800.0,340.0 1760.0,368.0" fill="#007f64"/>
<polygon points="1640.0,470.0 1690.0,428.0 1700.0,452.0 1670.0,490.0" fill="#00cea4"/>
<polygon points="1700.0,385.0 1730.0,372.0 1735.0,420.0 1722.0,443.0 1708.0,450.0" fill="#00ad8a"/>
<polygon points="1760.0,372.0 1800.0,338.0 1806.0,350.0 1768.0,392.0" fill="#00ad8a"/>
<path d="M1329 388Q1333 385 1338 386L1436 455L1437 484L1427 485L1345 434Q1334 425 1331 412Z" fill="#00c79d"/>
<path d="M1338 392L1430 458L1431 470L1380 440L1345 420Z" fill="#007f64"/>
<polygon points="1355.3,359.0 1404.0,336.9 1420.0,337.8 1496.4,374.0 1497.3,381.3 1457.3,403.4 1441.4,404.3 1358.0,363.5" fill="#007f64"/>
<polygon points="1366.0,362.0 1404.0,344.0 1418.0,345.0 1452.0,362.0 1412.0,385.0" fill="#00977a"/>
<polygon points="1414.7,392.0 1441.4,380.4 1452.0,383.0 1453.0,403.4 1443.0,404.3 1430.7,400.8" fill="#fff"/>
<polygon points="1414.7,254.5 1415.6,235.0 1421.0,229.7 1430.7,228.2 1459.0,235.3 1585.2,197.7 1586.0,185.3 1594.0,181.7 1600.0,183.5 1610.0,186.0 1610.0,207.0 1487.0,241.0 1440.0,258.0 1420.0,262.0" fill="#00a886"/>
<polygon points="1421.0,229.7 1430.7,228.2 1459.0,235.3 1585.2,197.7 1590.0,200.0 1462.0,240.0 1432.0,233.0" fill="#00cea4"/>
<polygon points="1376.6,264.4 1393.4,257.2 1404.6,263.2 1404.6,277.6 1387.8,281.2 1376.6,275.2" fill="#00ad8a"/>
<polygon points="1387.8,270.4 1404.6,263.2 1404.6,277.6 1387.8,281.2" fill="#007f64"/>
<polygon points="1421.0,293.4 1439.0,285.0 1451.0,292.0 1451.0,308.8 1433.0,313.0 1421.0,306.0" fill="#00ad8a"/>
<polygon points="1433.0,300.4 1451.0,292.0 1451.0,308.8 1433.0,313.0" fill="#007f64"/>
<polygon points="1538.0,277.8 1554.8,270.0 1566.0,276.5 1566.0,292.1 1549.2,296.0 1538.0,289.5" fill="#00ad8a"/>
<polygon points="1549.2,284.3 1566.0,276.5 1566.0,292.1 1549.2,296.0" fill="#007f64"/>
<polygon points="1588.0,298.4 1606.0,290.0 1618.0,297.0 1618.0,313.8 1600.0,318.0 1588.0,311.0" fill="#00ad8a"/>
<polygon points="1600.0,305.4 1618.0,297.0 1618.0,313.8 1600.0,318.0" fill="#007f64"/>
<polygon points="1478.0,290.2 1491.2,286.0 1500.0,289.5 1500.0,297.9 1486.8,300.0 1478.0,296.5" fill="#00ad8a"/>
<polygon points="1486.8,293.7 1500.0,289.5 1500.0,297.9 1486.8,300.0" fill="#007f64"/>
<polygon points="1524.0,283.6 1536.0,280.0 1544.0,283.0 1544.0,290.2 1532.0,292.0 1524.0,289.0" fill="#00ad8a"/>
<polygon points="1532.0,286.6 1544.0,283.0 1544.0,290.2 1532.0,292.0" fill="#007f64"/>
<polygon points="1340.0,302.6 1361.6,296.0 1376.0,301.5 1376.0,314.7 1354.4,318.0 1340.0,312.5" fill="#00ad8a"/>
<polygon points="1354.4,308.1 1376.0,301.5 1376.0,314.7 1354.4,318.0" fill="#007f64"/>
<polygon points="1354.0,318.0 1375.6,312.0 1390.0,317.0 1390.0,329.0 1368.4,332.0 1354.0,327.0" fill="#00ad8a"/>
<polygon points="1368.4,323.0 1390.0,317.0 1390.0,329.0 1368.4,332.0" fill="#007f64"/>
<polygon points="1610.0,208.4 1628.0,200.0 1640.0,207.0 1640.0,223.8 1622.0,228.0 1610.0,221.0" fill="#00ad8a"/>
<polygon points="1622.0,215.4 1640.0,207.0 1640.0,223.8 1622.0,228.0" fill="#007f64"/>
<polygon points="1625.0,251.6 1649.0,245.0 1665.0,250.5 1665.0,263.7 1641.0,267.0 1625.0,261.5" fill="#00ad8a"/>
<polygon points="1641.0,257.1 1665.0,250.5 1665.0,263.7 1641.0,267.0" fill="#007f64"/>
<polygon points="1700.0,209.0 1713.2,200.0 1722.0,207.5 1722.0,225.5 1708.8,230.0 1700.0,222.5" fill="#00ad8a"/>
<polygon points="1708.8,216.5 1722.0,207.5 1722.0,225.5 1708.8,230.0" fill="#007f64"/>
<polygon points="1745.0,244.6 1763.0,238.0 1775.0,243.5 1775.0,256.7 1757.0,260.0 1745.0,254.5" fill="#00ad8a"/>
<polygon points="1757.0,250.1 1775.0,243.5 1775.0,256.7 1757.0,260.0" fill="#007f64"/>
<polygon points="1700.0,271.0 1721.6,262.0 1736.0,269.5 1736.0,287.5 1714.4,292.0 1700.0,284.5" fill="#00ad8a"/>
<polygon points="1714.4,278.5 1736.0,269.5 1736.0,287.5 1714.4,292.0" fill="#007f64"/>
<polygon points="1620.0,312.0 1638.0,300.0 1650.0,310.0 1650.0,334.0 1632.0,340.0 1620.0,330.0" fill="#00ad8a"/>
<polygon points="1632.0,322.0 1650.0,310.0 1650.0,334.0 1632.0,340.0" fill="#007f64"/>
<polygon points="1560.0,339.0 1578.0,330.0 1590.0,337.5 1590.0,355.5 1572.0,360.0 1560.0,352.5" fill="#00ad8a"/>
<polygon points="1572.0,346.5 1590.0,337.5 1590.0,355.5 1572.0,360.0" fill="#007f64"/>
<polygon points="1690.0,342.0 1708.0,330.0 1720.0,340.0 1720.0,364.0 1702.0,370.0 1690.0,360.0" fill="#00ad8a"/>
<polygon points="1702.0,352.0 1720.0,340.0 1720.0,364.0 1702.0,370.0" fill="#007f64"/>
<polygon points="1800.0,238.6 1824.0,232.0 1840.0,237.5 1840.0,250.7 1816.0,254.0 1800.0,248.5" fill="#00ad8a"/>
<polygon points="1816.0,244.1 1840.0,237.5 1840.0,250.7 1816.0,254.0" fill="#007f64"/>
<polygon points="1830.0,259.0 1854.0,250.0 1870.0,257.5 1870.0,275.5 1846.0,280.0 1830.0,272.5" fill="#00ad8a"/>
<polygon points="1846.0,266.5 1870.0,257.5 1870.0,275.5 1846.0,280.0" fill="#007f64"/>
<polygon points="1560.0,404.0 1584.0,395.0 1600.0,402.5 1600.0,420.5 1576.0,425.0 1560.0,417.5" fill="#00ad8a"/>
<polygon points="1576.0,411.5 1600.0,402.5 1600.0,420.5 1576.0,425.0" fill="#007f64"/>
<polygon points="1530.0,452.0 1566.0,440.0 1590.0,450.0 1590.0,474.0 1554.0,480.0 1530.0,470.0" fill="#00ad8a"/>
<polygon points="1554.0,462.0 1590.0,450.0 1590.0,474.0 1554.0,480.0" fill="#007f64"/>
<polygon points="1620.0,412.0 1650.0,400.0 1670.0,410.0 1670.0,434.0 1640.0,440.0 1620.0,430.0" fill="#00ad8a"/>
<polygon points="1640.0,422.0 1670.0,410.0 1670.0,434.0 1640.0,440.0" fill="#007f64"/>
<polygon points="1740.0,304.8 1782.0,300.0 1810.0,304.0 1810.0,313.6 1768.0,316.0 1740.0,312.0" fill="#00ad8a"/>
<polygon points="1768.0,308.8 1810.0,304.0 1810.0,313.6 1768.0,316.0" fill="#007f64"/>
<polygon points="1770.0,272.2 1800.0,268.0 1820.0,271.5 1820.0,279.9 1790.0,282.0 1770.0,278.5" fill="#00ad8a"/>
<polygon points="1790.0,275.7 1820.0,271.5 1820.0,279.9 1790.0,282.0" fill="#007f64"/>
<ellipse cx="1514" cy="305" rx="20" ry="8" fill="#007f64"/>
<ellipse cx="1566" cy="322" rx="21" ry="9" fill="#007f64"/>
<ellipse cx="1722" cy="209" rx="14" ry="5" fill="#007f64"/>
<ellipse cx="1826" cy="273" rx="8" ry="3" fill="#007f64"/>
<polygon points="1712.0,300.0 1810.0,262.0 1856.0,276.0 1850.0,300.0 1762.0,352.0 1740.0,350.0" fill="#00ad8a"/>
<polygon points="1730.0,310.0 1812.0,275.0 1840.0,284.0 1760.0,335.0" fill="#00cea4"/>
<polygon points="1712.0,395.0 1760.0,350.0 1762.0,352.0 1850.0,300.0 1856.0,276.0 1880.0,262.0 1884.0,279.4 1845.0,330.0 1795.0,369.0 1753.0,411.0 1724.0,443.0 1712.0,420.0" fill="#00ad8a"/>
<polygon points="1872.0,268.0 1884.0,262.0 1884.0,279.4 1845.0,330.0 1834.0,328.0 1795.0,369.0 1760.0,404.0 1753.0,411.0 1740.0,418.0 1790.0,360.0 1836.0,316.0" fill="#007f64"/>
<path d="M1696 372Q1712 368 1724 380Q1732 390 1730 410L1724 443L1712 446L1714 408Q1714 392 1704 386L1694 382Z" fill="#00b892"/>
<polygon points="1376.0,271.0 1410.0,266.0 1600.0,232.0 1640.0,221.0 1650.0,226.0 1640.0,240.0 1600.0,250.0 1440.0,280.0 1398.0,292.0 1376.0,284.0" fill="#00b08c"/>
<polygon points="1790.0,214.0 1724.0,224.0 1684.0,230.0 1660.0,250.0 1600.0,340.0 1596.0,378.0 1628.0,385.0 1660.0,330.0 1690.0,262.0 1724.0,240.0 1800.0,232.0 1840.0,222.0" fill="#00b08c"/>
<polygon points="1375.0,271.0 1380.0,266.0 1420.0,258.0 1440.0,262.0 1418.0,282.0 1398.0,292.0 1376.0,284.0" fill="#33b5d8"/>
<polygon points="1590.0,350.0 1640.0,338.0 1648.0,352.0 1628.0,385.0 1596.0,378.0" fill="#33b5d8"/>
<polygon points="1790.0,214.0 1840.0,222.0 1830.0,232.0 1790.0,228.0" fill="#55c8d8"/>
<polygon points="1408.6,279.6 1416.9,278.2 1425.2,276.7 1433.5,275.3 1441.8,273.9 1449.3,272.4 1456.8,270.9 1464.3,269.4 1471.7,267.9 1489.2,264.7 1506.7,261.6 1524.2,258.4 1541.6,255.3 1556.5,253.0 1571.5,250.8 1586.5,248.5 1601.8,246.2 1608.7,244.4 1615.0,242.8 1621.2,241.1 1628.6,239.2 1633.7,236.0 1637.4,233.6 1641.0,231.2 1645.6,228.1 1649.5,224.0 1652.6,220.6 1655.7,217.2 1659.4,213.2 1661.7,209.1 1663.3,206.0 1664.9,202.9 1666.4,199.9 1667.0,198.5 1667.9,196.9 1668.7,195.3 1669.3,194.1 1669.3,193.8 1669.9,192.9 1670.5,192.0 1671.2,191.2 1662.8,182.8 1662.0,183.5 1661.1,184.1 1660.2,184.7 1658.7,185.9 1657.3,187.7 1656.1,189.1 1655.0,190.5 1653.6,192.1 1651.6,195.1 1649.7,198.0 1647.8,200.9 1646.6,202.8 1643.8,205.3 1640.4,208.4 1637.0,211.5 1634.4,213.9 1631.5,215.3 1627.6,217.4 1623.8,219.5 1621.4,220.8 1616.3,222.1 1610.0,223.7 1603.8,225.4 1598.2,226.8 1583.5,229.3 1568.5,231.7 1553.5,234.2 1538.4,236.7 1520.8,240.1 1503.3,243.4 1485.8,246.8 1468.3,250.1 1460.7,251.6 1453.2,253.1 1445.7,254.6 1438.2,256.1 1430.0,257.9 1421.8,259.8 1413.6,261.6 1405.4,263.4" fill="#35d46a"/>
<polygon points="1408.2,277.8 1416.5,276.3 1424.8,274.8 1433.1,273.4 1441.4,271.9 1448.9,270.4 1456.4,268.9 1463.9,267.4 1471.3,265.9 1488.8,262.8 1506.3,259.6 1523.8,256.4 1541.3,253.3 1556.2,251.0 1571.2,248.7 1586.2,246.4 1601.4,244.1 1608.2,242.4 1614.5,240.8 1620.7,239.1 1627.8,237.2 1632.6,234.2 1636.3,231.9 1640.0,229.5 1644.4,226.6 1648.1,222.6 1651.3,219.3 1654.4,215.9 1658.0,212.0 1660.1,208.1 1661.7,205.0 1663.3,202.0 1664.9,199.0 1665.6,197.6 1666.4,196.0 1667.3,194.4 1667.9,193.1 1668.2,192.7 1668.8,191.8 1669.4,190.9 1670.0,190.0 1664.0,184.0 1663.1,184.6 1662.2,185.2 1661.3,185.8 1660.1,186.9 1658.7,188.6 1657.6,190.0 1656.4,191.4 1655.1,193.0 1653.2,196.0 1651.3,199.0 1649.4,201.9 1648.0,204.0 1645.1,206.6 1641.7,209.7 1638.4,212.9 1635.6,215.4 1632.5,217.0 1628.7,219.1 1624.9,221.3 1622.2,222.8 1616.8,224.1 1610.5,225.7 1604.3,227.4 1598.6,228.9 1583.8,231.3 1568.8,233.8 1553.8,236.2 1538.7,238.7 1521.2,242.1 1503.7,245.4 1486.2,248.7 1468.7,252.1 1461.1,253.6 1453.6,255.1 1446.1,256.6 1438.6,258.1 1430.4,259.9 1422.2,261.7 1414.0,263.5 1405.8,265.2" fill="#d8e800"/>
<polygon points="1407.9,276.1 1416.2,274.6 1424.5,273.1 1432.7,271.6 1441.0,270.1 1448.5,268.6 1456.0,267.1 1463.5,265.6 1471.0,264.1 1488.5,261.0 1506.0,257.8 1523.5,254.6 1540.9,251.5 1555.9,249.2 1570.9,246.9 1585.9,244.6 1601.1,242.2 1607.7,240.5 1614.0,238.9 1620.2,237.3 1627.1,235.4 1631.7,232.6 1635.3,230.2 1639.0,227.9 1643.2,225.1 1646.9,221.4 1650.0,218.0 1653.1,214.6 1656.6,210.9 1658.6,207.3 1660.3,204.2 1661.9,201.1 1663.5,198.1 1664.3,196.7 1665.1,195.1 1666.0,193.5 1666.7,192.1 1667.1,191.6 1667.7,190.7 1668.4,189.9 1669.0,189.0 1665.0,185.0 1664.1,185.6 1663.3,186.3 1662.4,186.9 1661.3,187.9 1660.0,189.5 1658.9,190.9 1657.7,192.3 1656.5,193.9 1654.6,196.9 1652.7,199.8 1650.9,202.7 1649.4,205.1 1646.4,207.9 1643.0,211.0 1639.6,214.1 1636.8,216.9 1633.5,218.6 1629.7,220.8 1625.8,222.9 1622.9,224.6 1617.3,226.0 1611.0,227.6 1604.8,229.2 1598.9,230.8 1584.1,233.2 1569.1,235.6 1554.1,238.1 1539.1,240.5 1521.5,243.9 1504.0,247.2 1486.5,250.5 1469.0,253.9 1461.5,255.4 1454.0,256.9 1446.5,258.4 1439.0,259.9 1430.8,261.6 1422.5,263.4 1414.3,265.2 1406.1,266.9" fill="#ff7a00"/>
<polygon points="1407.6,274.4 1415.9,272.9 1424.1,271.4 1432.4,269.9 1440.7,268.4 1448.2,266.9 1455.7,265.4 1463.2,263.9 1470.7,262.4 1488.2,259.3 1505.7,256.1 1523.2,252.9 1540.6,249.7 1555.6,247.4 1570.6,245.1 1585.6,242.8 1600.7,240.4 1607.3,238.7 1613.5,237.1 1619.8,235.5 1626.4,233.7 1630.7,231.1 1634.4,228.7 1638.1,226.4 1642.2,223.8 1645.6,220.1 1648.8,216.8 1652.0,213.5 1655.3,209.9 1657.2,206.4 1658.9,203.4 1660.5,200.3 1662.1,197.3 1663.0,195.8 1663.9,194.2 1664.8,192.7 1665.6,191.2 1666.1,190.6 1666.7,189.7 1667.4,188.9 1668.1,188.1 1665.9,185.9 1665.1,186.6 1664.3,187.3 1663.4,187.9 1662.4,188.8 1661.2,190.3 1660.1,191.8 1659.0,193.2 1657.9,194.7 1656.0,197.7 1654.1,200.6 1652.3,203.6 1650.7,206.1 1647.5,209.0 1644.2,212.2 1640.9,215.4 1637.8,218.2 1634.4,220.1 1630.6,222.3 1626.8,224.4 1623.6,226.3 1617.7,227.8 1611.5,229.4 1605.2,231.0 1599.3,232.6 1584.4,235.0 1569.4,237.4 1554.4,239.9 1539.4,242.3 1521.8,245.6 1504.3,248.9 1486.8,252.2 1469.3,255.6 1461.8,257.1 1454.3,258.6 1446.8,260.1 1439.3,261.6 1431.1,263.3 1422.9,265.1 1414.6,266.8 1406.4,268.6" fill="#de0500"/>
<polygon points="1811.9,214.1 1806.4,214.0 1800.9,213.8 1795.3,213.6 1789.6,213.5 1784.0,213.8 1778.8,214.1 1773.5,214.5 1767.9,214.8 1756.4,216.2 1745.1,217.6 1733.7,218.9 1722.5,220.3 1716.8,220.8 1710.7,221.3 1704.7,221.9 1698.2,222.5 1694.4,223.3 1691.6,223.9 1688.8,224.4 1685.1,225.3 1681.4,226.6 1678.5,227.6 1675.7,228.5 1671.0,230.5 1667.2,233.7 1665.3,235.3 1663.4,236.9 1660.8,239.4 1657.9,242.8 1655.5,245.7 1653.1,248.6 1650.7,251.5 1648.2,254.4 1645.8,257.2 1643.4,260.1 1640.9,263.1 1637.4,267.6 1633.9,271.9 1630.4,276.2 1626.9,280.5 1623.5,284.9 1620.1,289.3 1616.7,293.7 1612.8,298.8 1609.0,304.8 1605.6,310.2 1602.1,315.6 1598.8,320.9 1597.1,324.1 1595.2,327.4 1593.4,330.8 1591.5,334.2 1591.6,336.0 1591.7,337.8 1591.8,339.6 1591.9,341.3 1614.1,354.7 1615.7,353.9 1617.3,353.2 1618.9,352.5 1620.5,351.8 1622.6,348.7 1624.8,345.6 1626.9,342.4 1629.2,339.1 1632.4,333.4 1635.4,327.8 1638.5,322.2 1641.2,317.2 1643.8,313.3 1646.9,308.7 1650.0,304.1 1653.1,299.5 1656.1,294.8 1659.1,290.1 1662.1,285.4 1665.1,280.9 1667.1,277.9 1669.2,274.8 1671.3,271.6 1673.3,268.5 1675.4,265.4 1677.5,262.3 1679.6,259.2 1681.2,256.6 1682.1,255.6 1683.7,253.7 1685.3,251.8 1685.0,251.5 1685.8,251.0 1688.5,249.4 1691.1,247.9 1692.9,246.7 1694.7,246.1 1697.4,245.1 1700.1,244.2 1701.8,243.5 1707.3,242.6 1713.3,241.7 1719.2,240.7 1725.5,239.7 1736.8,237.4 1747.9,235.0 1759.1,232.7 1770.1,230.4 1775.0,229.7 1780.2,229.0 1785.5,228.2 1790.4,227.5 1795.7,227.1 1801.1,226.7 1806.6,226.3 1812.1,225.9" fill="#35d46a"/>
<polygon points="1811.9,215.7 1806.4,215.6 1800.9,215.4 1795.4,215.3 1789.7,215.2 1784.2,215.5 1778.9,215.9 1773.7,216.2 1768.1,216.6 1756.7,218.1 1745.4,219.5 1734.1,220.9 1722.8,222.3 1717.0,222.9 1711.0,223.5 1705.0,224.0 1698.6,224.7 1695.0,225.4 1692.2,226.0 1689.4,226.6 1685.9,227.4 1682.4,228.7 1679.5,229.7 1676.7,230.7 1672.4,232.5 1668.9,235.4 1667.1,237.1 1665.2,238.7 1662.7,241.0 1659.9,244.4 1657.5,247.3 1655.2,250.2 1652.8,253.1 1650.4,256.0 1648.0,258.9 1645.6,261.8 1643.1,264.8 1639.6,269.2 1636.2,273.5 1632.7,277.9 1629.3,282.2 1625.9,286.6 1622.5,291.0 1619.1,295.4 1615.3,300.4 1611.6,306.3 1608.2,311.7 1604.8,317.1 1601.5,322.5 1599.7,325.7 1597.8,329.0 1596.0,332.4 1594.1,335.7 1594.0,337.5 1594.0,339.2 1594.0,340.9 1594.0,342.6 1612.0,353.4 1613.5,352.6 1615.0,351.8 1616.5,351.0 1617.9,350.3 1620.0,347.1 1622.2,344.0 1624.3,340.8 1626.5,337.5 1629.7,331.9 1632.8,326.3 1635.9,320.7 1638.7,315.6 1641.4,311.6 1644.5,307.0 1647.6,302.4 1650.7,297.8 1653.8,293.1 1656.8,288.5 1659.9,283.8 1662.9,279.2 1664.9,276.2 1667.0,273.1 1669.1,270.0 1671.2,266.9 1673.3,263.8 1675.5,260.7 1677.6,257.6 1679.3,255.0 1680.3,253.8 1681.9,251.9 1683.6,250.1 1683.6,249.5 1684.8,248.8 1687.5,247.3 1690.1,245.8 1692.1,244.6 1694.1,243.9 1696.8,243.0 1699.5,242.1 1701.4,241.3 1707.0,240.5 1713.0,239.5 1719.0,238.6 1725.2,237.7 1736.4,235.4 1747.6,233.1 1758.8,230.8 1769.9,228.6 1774.8,227.9 1780.1,227.2 1785.3,226.5 1790.3,225.8 1795.6,225.5 1801.1,225.1 1806.6,224.7 1812.1,224.3" fill="#d8e800"/>
<polygon points="1811.9,217.1 1806.4,217.0 1800.9,216.9 1795.4,216.8 1789.8,216.7 1784.4,217.1 1779.1,217.5 1773.8,217.9 1768.4,218.3 1757.0,219.8 1745.7,221.3 1734.4,222.8 1723.1,224.2 1717.3,224.8 1711.2,225.4 1705.2,226.0 1698.9,226.7 1695.5,227.4 1692.7,228.0 1689.9,228.6 1686.6,229.4 1683.3,230.7 1680.4,231.7 1677.6,232.8 1673.6,234.4 1670.6,237.1 1668.7,238.7 1666.8,240.3 1664.5,242.5 1661.8,245.8 1659.5,248.7 1657.1,251.6 1654.7,254.5 1652.4,257.5 1650.0,260.4 1647.6,263.3 1645.2,266.3 1641.7,270.7 1638.3,275.1 1634.9,279.4 1631.4,283.8 1628.1,288.2 1624.7,292.6 1621.3,297.1 1617.6,301.9 1614.0,307.7 1610.6,313.2 1607.3,318.6 1603.9,324.0 1602.1,327.2 1600.2,330.5 1598.4,333.8 1596.5,337.2 1596.3,338.9 1596.2,340.5 1596.1,342.2 1596.0,343.8 1610.0,352.2 1611.4,351.3 1612.8,350.5 1614.2,349.6 1615.5,348.8 1617.6,345.7 1619.8,342.5 1621.9,339.3 1624.1,336.0 1627.2,330.4 1630.4,324.8 1633.5,319.3 1636.4,314.1 1639.2,309.9 1642.3,305.4 1645.4,300.8 1648.6,296.2 1651.6,291.6 1654.7,286.9 1657.8,282.3 1660.8,277.7 1662.9,274.7 1665.0,271.6 1667.1,268.5 1669.3,265.5 1671.4,262.4 1673.5,259.3 1675.7,256.2 1677.5,253.5 1678.7,252.2 1680.3,250.3 1681.9,248.4 1682.4,247.6 1683.9,246.7 1686.6,245.3 1689.2,243.8 1691.4,242.6 1693.6,241.9 1696.3,241.0 1699.0,240.1 1701.1,239.3 1706.8,238.5 1712.8,237.6 1718.7,236.7 1724.9,235.8 1736.1,233.5 1747.3,231.3 1758.5,229.1 1769.6,226.9 1774.7,226.3 1779.9,225.6 1785.1,224.9 1790.2,224.3 1795.6,223.9 1801.1,223.6 1806.6,223.2 1812.1,222.9" fill="#ff7a00"/>
<polygon points="1812.0,218.5 1806.5,218.4 1801.0,218.4 1795.5,218.3 1789.9,218.3 1784.5,218.7 1779.3,219.1 1774.0,219.5 1768.6,219.9 1757.3,221.4 1746.0,223.0 1734.7,224.5 1723.4,226.0 1717.5,226.7 1711.5,227.3 1705.5,227.9 1699.2,228.6 1696.0,229.3 1693.3,229.9 1690.5,230.5 1687.3,231.3 1684.1,232.5 1681.3,233.6 1678.4,234.7 1674.8,236.2 1672.1,238.6 1670.3,240.3 1668.4,241.9 1666.2,244.0 1663.7,247.2 1661.3,250.1 1659.0,253.0 1656.6,255.9 1654.2,258.9 1651.9,261.8 1649.5,264.7 1647.2,267.7 1643.7,272.1 1640.3,276.5 1636.9,280.9 1633.5,285.3 1630.2,289.7 1626.8,294.2 1623.5,298.6 1619.9,303.4 1616.3,309.1 1613.0,314.5 1609.6,320.0 1606.3,325.4 1604.4,328.6 1602.5,331.9 1600.7,335.2 1598.7,338.6 1598.5,340.2 1598.3,341.8 1598.1,343.3 1597.9,344.9 1608.1,351.1 1609.4,350.2 1610.7,349.2 1612.0,348.3 1613.3,347.4 1615.3,344.3 1617.5,341.1 1619.6,337.9 1621.7,334.6 1624.9,329.0 1628.0,323.5 1631.2,317.9 1634.1,312.6 1637.0,308.4 1640.2,303.8 1643.3,299.3 1646.5,294.7 1649.6,290.1 1652.7,285.5 1655.8,280.9 1658.8,276.3 1661.0,273.3 1663.1,270.2 1665.2,267.1 1667.4,264.1 1669.5,261.0 1671.7,257.9 1673.8,254.8 1675.8,252.0 1677.1,250.6 1678.7,248.7 1680.4,246.9 1681.2,245.8 1683.1,244.8 1685.7,243.4 1688.4,242.0 1690.7,240.7 1693.0,240.0 1695.7,239.1 1698.5,238.2 1700.8,237.4 1706.5,236.6 1712.5,235.7 1718.5,234.8 1724.6,234.0 1735.8,231.8 1747.0,229.6 1758.2,227.5 1769.4,225.3 1774.5,224.7 1779.7,224.0 1785.0,223.4 1790.1,222.7 1795.5,222.4 1801.0,222.1 1806.5,221.8 1812.0,221.5" fill="#de0500"/>
<path d="M1724 230.500S1695 233 1684 239S1664 257 1653 273S1634 299 1622 317S1612 331 1606 342" fill="none" stroke="#ffb000" stroke-width="1.200"/>
<path d="M1359.700 462L1361.500 442" stroke="#22cc22" stroke-width="1"/><path d="M1359.700 462L1371 455" stroke="#e02020" stroke-width="1"/><path d="M1359.700 462L1342 457" stroke="#e8e040" stroke-width="1"/>
<circle cx="1361.500" cy="443" r="1.600" fill="#22cc22"/><circle cx="1371" cy="455" r="1.600" fill="#d01010"/><path d="M1339 455l4 -1v4z" fill="#8a8a20"/>
<rect x="1657.700" y="498.400" width="190.800" height="7.600" fill="url(#lg)"/>
<path d="M1657.7 494V499" stroke="#555" stroke-width="0.700"/>
<path d="M1712.7 494V499" stroke="#555" stroke-width="0.700"/>
<path d="M1740.2 494V499" stroke="#555" stroke-width="0.700"/>
<path d="M1767.4 494V499" stroke="#555" stroke-width="0.700"/>
<path d="M1794.7 494V499" stroke="#555" stroke-width="0.700"/>
<path d="M1848.5 494V499" stroke="#555" stroke-width="0.700"/>
</svg>
<span style="position:absolute;left:7.0px;top:3.40px;font-size:8.5px;line-height:8.5px;color:#333;letter-spacing:-0.117px;white-space:pre;">Time: 119.266968</span>
<span style="position:absolute;left:47.4px;top:334.76px;font-size:9.5px;line-height:9.5px;color:#333;letter-spacing:-0.428px;white-space:pre;">The 12th Cycle (Start 108 sec)</span>
<span style="position:absolute;left:409.3px;top:322.63px;font-size:8px;line-height:8px;color:#333;letter-spacing:-0.016px;white-space:pre;">Temperature (C)</span>
<span style="position:absolute;left:321.4px;top:332.35px;font-size:7.5px;line-height:7.5px;color:#333;letter-spacing:-0.219px;white-space:pre;">3.00000e+01</span>
<span style="position:absolute;left:386.5px;top:332.35px;font-size:7.5px;line-height:7.5px;color:#333;letter-spacing:-0.173px;white-space:pre;">50.000</span>
<span style="position:absolute;left:413.7px;top:332.35px;font-size:7.5px;line-height:7.5px;color:#333;letter-spacing:-0.107px;white-space:pre;">60.000</span>
<span style="position:absolute;left:441.2px;top:332.35px;font-size:7.5px;line-height:7.5px;color:#333;letter-spacing:-0.190px;white-space:pre;">70.000</span>
<span style="position:absolute;left:468.4px;top:332.35px;font-size:7.5px;line-height:7.5px;color:#333;letter-spacing:-0.157px;white-space:pre;">80.000</span>
<span style="position:absolute;left:512.8px;top:332.35px;font-size:7.5px;line-height:7.5px;color:#333;letter-spacing:-0.146px;white-space:pre;">1.00000e+02</span>
<span style="position:absolute;left:49.5px;top:285.07px;font-size:7px;line-height:7px;color:#333;letter-spacing:-0.276px;white-space:pre;">Z</span>
<span style="position:absolute;left:57.0px;top:296.07px;font-size:7px;line-height:7px;color:#333;letter-spacing:-0.669px;white-space:pre;">X</span>
<span style="position:absolute;left:31.0px;top:296.07px;font-size:7px;line-height:7px;color:#333;letter-spacing:-0.669px;white-space:pre;">Y</span>
</div>
<!-- sec_view -->
<svg style="position:absolute;left:341px;top:201px" width="10" height="10" viewBox="0 0 10 10"><path d="M9.500 0.500V9.500H0.500Z" fill="#555"/></svg>
<span style="position:absolute;left:365.6px;top:198.65px;font-size:14px;line-height:14px;color:#858585;letter-spacing:-0.207px;white-space:pre;">Mesh objects</span>
<svg style="position:absolute;left:364px;top:228.0px" width="17" height="17" viewBox="0 0 17 17"><rect x="0.800" y="0.800" width="15.400" height="15.400" rx="1.600" fill="#fff" stroke="#6a6866" stroke-width="1.700"/></svg>
<span style="position:absolute;left:387.3px;top:228.85px;font-size:14px;line-height:14px;color:#858585;letter-spacing:-0.302px;white-space:pre;">Others</span>
<svg style="position:absolute;left:364px;top:258.0px" width="17" height="17" viewBox="0 0 17 17"><rect x="0.800" y="0.800" width="15.400" height="15.400" rx="1.600" fill="#fff" stroke="#6a6866" stroke-width="1.700"/></svg>
<span style="position:absolute;left:387.3px;top:258.85px;font-size:14px;line-height:14px;color:#858585;letter-spacing:-0.416px;white-space:pre;">Die01</span>
<svg style="position:absolute;left:364px;top:288.0px" width="17" height="17" viewBox="0 0 17 17"><rect x="0.800" y="0.800" width="15.400" height="15.400" rx="1.600" fill="#fff" stroke="#6a6866" stroke-width="1.700"/></svg>
<span style="position:absolute;left:387.3px;top:288.85px;font-size:14px;line-height:14px;color:#858585;letter-spacing:-0.467px;white-space:pre;">Punch01</span>
<svg style="position:absolute;left:364px;top:318.0px" width="17" height="17" viewBox="0 0 17 17"><rect x="0.800" y="0.800" width="15.400" height="15.400" rx="1.600" fill="#fff" stroke="#6a6866" stroke-width="1.700"/></svg>
<span style="position:absolute;left:387.3px;top:318.85px;font-size:14px;line-height:14px;color:#858585;letter-spacing:-0.494px;white-space:pre;">Tube01</span>
<svg style="position:absolute;left:364px;top:348.0px" width="17" height="17" viewBox="0 0 17 17"><rect x="0.800" y="0.800" width="15.400" height="15.400" rx="1.600" fill="#fff" stroke="#6a6866" stroke-width="1.700"/></svg>
<span style="position:absolute;left:387.3px;top:348.85px;font-size:14px;line-height:14px;color:#858585;letter-spacing:-0.407px;white-space:pre;">Tube_dummy</span>
<svg style="position:absolute;left:364px;top:378.0px" width="17" height="17" viewBox="0 0 17 17"><rect x="0.800" y="0.800" width="15.400" height="15.400" rx="1.600" fill="#fff" stroke="#6a6866" stroke-width="1.700"/></svg>
<span style="position:absolute;left:387.3px;top:378.85px;font-size:14px;line-height:14px;color:#858585;letter-spacing:-0.467px;white-space:pre;">Punch02</span>
<svg style="position:absolute;left:364px;top:408.0px" width="17" height="17" viewBox="0 0 17 17"><rect x="0.800" y="0.800" width="15.400" height="15.400" rx="1.600" fill="#fff" stroke="#6a6866" stroke-width="1.700"/></svg>
<span style="position:absolute;left:387.3px;top:408.85px;font-size:14px;line-height:14px;color:#858585;letter-spacing:-0.416px;white-space:pre;">Die02</span>
<svg style="position:absolute;left:364px;top:438.0px" width="17" height="17" viewBox="0 0 17 17"><rect x="0.800" y="0.800" width="15.400" height="15.400" rx="1.600" fill="#fff" stroke="#6a6866" stroke-width="1.700"/></svg>
<span style="position:absolute;left:387.3px;top:438.85px;font-size:14px;line-height:14px;color:#858585;letter-spacing:-0.657px;white-space:pre;">Tube_Skin</span>
<svg style="position:absolute;left:364px;top:468.0px" width="17" height="17" viewBox="0 0 17 17"><rect x="0.800" y="0.800" width="15.400" height="15.400" rx="1.600" fill="#fff" stroke="#6a6866" stroke-width="1.700"/><rect x="4.500" y="4.500" width="8" height="8" fill="#5a5a5a"/></svg>
<span style="position:absolute;left:387.3px;top:468.85px;font-size:14px;line-height:14px;color:#858585;letter-spacing:-0.796px;white-space:pre;">Tube_3D</span>
<svg style="position:absolute;left:364px;top:498.0px" width="17" height="17" viewBox="0 0 17 17"><rect x="0.800" y="0.800" width="15.400" height="15.400" rx="1.600" fill="#fff" stroke="#6a6866" stroke-width="1.700"/></svg>
<span style="position:absolute;left:387.3px;top:498.85px;font-size:14px;line-height:14px;color:#858585;letter-spacing:-0.239px;white-space:pre;">UM_cooling_2D</span>
<svg style="position:absolute;left:364px;top:528.0px" width="17" height="17" viewBox="0 0 17 17"><rect x="0.800" y="0.800" width="15.400" height="15.400" rx="1.600" fill="#fff" stroke="#6a6866" stroke-width="1.700"/></svg>
<span style="position:absolute;left:387.3px;top:528.85px;font-size:14px;line-height:14px;color:#858585;letter-spacing:-0.370px;white-space:pre;">UM_Die3D</span>
<svg style="position:absolute;left:364px;top:558.0px" width="17" height="17" viewBox="0 0 17 17"><rect x="0.800" y="0.800" width="15.400" height="15.400" rx="1.600" fill="#fff" stroke="#6a6866" stroke-width="1.700"/><rect x="4.500" y="4.500" width="8" height="8" fill="#5a5a5a"/></svg>
<span style="position:absolute;left:387.3px;top:558.85px;font-size:14px;line-height:14px;color:#858585;letter-spacing:-0.223px;white-space:pre;">Down_Mould_3D</span>
<svg style="position:absolute;left:364px;top:588.0px" width="17" height="17" viewBox="0 0 17 17"><rect x="0.800" y="0.800" width="15.400" height="15.400" rx="1.600" fill="#fff" stroke="#6a6866" stroke-width="1.700"/></svg>
<span style="position:absolute;left:387.3px;top:588.85px;font-size:14px;line-height:14px;color:#858585;letter-spacing:-0.239px;white-space:pre;">DM_cooling_2D</span>
<svg style="position:absolute;left:364px;top:618.0px" width="17" height="17" viewBox="0 0 17 17"><rect x="0.800" y="0.800" width="15.400" height="15.400" rx="1.600" fill="#fff" stroke="#6a6866" stroke-width="1.700"/></svg>
<span style="position:absolute;left:387.3px;top:618.85px;font-size:14px;line-height:14px;color:#858585;letter-spacing:-0.613px;white-space:pre;">DM_Skin</span>
<svg style="position:absolute;left:364px;top:648.0px" width="17" height="17" viewBox="0 0 17 17"><rect x="0.800" y="0.800" width="15.400" height="15.400" rx="1.600" fill="#fff" stroke="#6a6866" stroke-width="1.700"/></svg>
<span style="position:absolute;left:387.3px;top:648.85px;font-size:14px;line-height:14px;color:#858585;letter-spacing:-0.613px;white-space:pre;">UM_Skin</span>
<svg style="position:absolute;left:341px;top:681px" width="10" height="10" viewBox="0 0 10 10"><path d="M9.500 0.500V9.500H0.500Z" fill="#555"/></svg>
<span style="position:absolute;left:365.6px;top:678.65px;font-size:14px;line-height:14px;color:#858585;letter-spacing:-0.076px;white-space:pre;">Geometry objects</span>
<svg style="position:absolute;left:364px;top:708.0px" width="17" height="17" viewBox="0 0 17 17"><rect x="0.800" y="0.800" width="15.400" height="15.400" rx="1.600" fill="#fff" stroke="#6a6866" stroke-width="1.700"/></svg>
<span style="position:absolute;left:387.3px;top:708.85px;font-size:14px;line-height:14px;color:#858585;letter-spacing:-1.448px;white-space:pre;">C3</span>
<svg style="position:absolute;left:364px;top:738.0px" width="17" height="17" viewBox="0 0 17 17"><rect x="0.800" y="0.800" width="15.400" height="15.400" rx="1.600" fill="#fff" stroke="#6a6866" stroke-width="1.700"/></svg>
<span style="position:absolute;left:387.3px;top:738.85px;font-size:14px;line-height:14px;color:#858585;letter-spacing:-1.524px;white-space:pre;">DIE_FACE</span>
<svg style="position:absolute;left:364px;top:768.0px" width="17" height="17" viewBox="0 0 17 17"><rect x="0.800" y="0.800" width="15.400" height="15.400" rx="1.600" fill="#fff" stroke="#6a6866" stroke-width="1.700"/></svg>
<span style="position:absolute;left:387.3px;top:768.85px;font-size:14px;line-height:14px;color:#858585;letter-spacing:0.026px;white-space:pre;">M18-3-OP30-V04-part</span>
<svg style="position:absolute;left:364px;top:798.0px" width="17" height="17" viewBox="0 0 17 17"><rect x="0.800" y="0.800" width="15.400" height="15.400" rx="1.600" fill="#fff" stroke="#6a6866" stroke-width="1.700"/></svg>
<span style="position:absolute;left:387.3px;top:798.85px;font-size:14px;line-height:14px;color:#858585;letter-spacing:-0.996px;white-space:pre;">PIPE02</span>
<svg style="position:absolute;left:364px;top:828.0px" width="17" height="17" viewBox="0 0 17 17"><rect x="0.800" y="0.800" width="15.400" height="15.400" rx="1.600" fill="#fff" stroke="#6a6866" stroke-width="1.700"/></svg>
<span style="position:absolute;left:387.3px;top:828.85px;font-size:14px;line-height:14px;color:#858585;letter-spacing:-0.018px;white-space:pre;">Unnamed part</span>
<svg style="position:absolute;left:364px;top:858.0px" width="17" height="17" viewBox="0 0 17 17"><rect x="0.800" y="0.800" width="15.400" height="15.400" rx="1.600" fill="#fff" stroke="#6a6866" stroke-width="1.700"/></svg>
<span style="position:absolute;left:387.3px;top:858.85px;font-size:14px;line-height:14px;color:#858585;letter-spacing:-0.174px;white-space:pre;">pipe01</span>
<div id="tabbar" style="position:absolute;left:326px;top:986px;width:1627px;height:19px;background:#f7f7f7"></div>
<span style="position:absolute;left:339.0px;top:989.29px;font-size:11px;line-height:11px;font-weight:700;color:#000;letter-spacing:0.028px;white-space:pre;">D:\user\yxj\2025_Hot_Forming_DEV\3_Demos\Example02\model\HGF2.semodel</span>
<svg style="position:absolute;left:769px;top:987px" width="12" height="12" viewBox="0 0 12 12"><rect width="12" height="12" fill="#c9444d"/><path d="M3.700 3.700L8.300 8.300M8.300 3.700L3.700 8.300" stroke="#fff" stroke-width="1.400"/></svg>
<div id="statusbar" style="position:absolute;left:0;top:1005px;width:1953px;height:20px;background:#f0f0f0;border-top:1px solid #d9d9d9;box-sizing:border-box"></div>
<span style="position:absolute;left:5.0px;top:1012.07px;font-size:11.5px;line-height:11.5px;color:#000;letter-spacing:-0.348px;white-space:pre;">Ready</span>
<div style="position:absolute;left:1934px;top:1007px;width:1px;height:15px;background:#d2d2d2"></div>
<svg style="position:absolute;left:1940px;top:1013px" width="10" height="10" viewBox="0 0 10 10" fill="#b4b4b4"><rect x="7" y="1" width="2" height="2"/><rect x="4" y="4" width="2" height="2"/><rect x="7" y="4" width="2" height="2"/><rect x="1" y="7" width="2" height="2"/><rect x="4" y="7" width="2" height="2"/><rect x="7" y="7" width="2" height="2"/></svg>
<div style="position:absolute;left:0;top:6px;width:1px;height:330px;background:#9a9a9a"></div>
<div style="position:absolute;left:0;top:336px;width:1px;height:683px;background:#2b2b3b"></div>
<div id="winframe" style="position:absolute;left:0;top:0;width:1951px;height:1022px;border-top:1px solid #a8a8a8;border-left:1px solid transparent;border-bottom:2px solid #2a2f45;border-right:1px solid #27304c;border-radius:8px;box-sizing:content-box;pointer-events:none"></div>
<div style="position:absolute;left:1951px;top:8px;width:1px;height:1008px;background:#b9bdc9"></div>
<!-- sec_right -->
<svg id="rtb" style="position:absolute;left:1915px;top:180px" width="36" height="730" viewBox="1915 180 36 730">
<rect x="1920" y="184.500" width="30" height="31.500" fill="#f79c33"/>
<rect x="1920" y="584.500" width="30" height="31" fill="#f79c33"/>
<rect x="1920" y="849" width="30" height="32" fill="#f79c33"/>
<path d="M1921 282.5H1949" stroke="#9a9a9a" stroke-width="1"/>
<path d="M1921 514.5H1949" stroke="#9a9a9a" stroke-width="1"/>
<path d="M1921 843.5H1949" stroke="#9a9a9a" stroke-width="1"/>
<defs><linearGradient id="gr1" x1="0" y1="0" x2="1" y2="1"><stop offset="0" stop-color="#8a8a8a"/><stop offset="1" stop-color="#f4f4f4"/></linearGradient><linearGradient id="gb" x1="0" y1="0" x2="1" y2="1"><stop offset="0" stop-color="#4a90e0"/><stop offset="1" stop-color="#f4f8ff"/></linearGradient><linearGradient id="gg" x1="0" y1="0" x2="1" y2="1"><stop offset="0" stop-color="#2a9a4a"/><stop offset="1" stop-color="#e8f8e8"/></linearGradient></defs>
<rect x="1927.500" y="195.500" width="16" height="11" fill="url(#gr1)" stroke="#777" stroke-width="1"/>
<path d="M1928 234l6 -6.500l8 1.500l-1.500 9.500l-8 0.500z" fill="#c4c4c4" stroke="#8a8a8a" stroke-width="1"/>
<circle cx="1935.500" cy="264" r="6" fill="#bdbdbd" stroke="#8a8a8a" stroke-width="1"/>
<path d="M1927 300l4 -5h12l-4 5z" fill="#fff" stroke="#222" stroke-width="1"/><path d="M1939 300l4 -5v11l-4 5z" fill="#fff" stroke="#222" stroke-width="1"/><rect x="1927" y="300" width="12" height="11" fill="#fff" stroke="#222" stroke-width="1"/><path d="M1929.5 303h7M1929.5 306h7M1929.5 309h7" stroke="#333" stroke-width="1" stroke-dasharray="1 1.500"/><path d="M1926 302v-3h3M1940 302v-3h-3M1926 309v3h3" fill="none" stroke="#2060d0" stroke-width="1.300"/><path d="M1937 304v9.500l2.300 -2.200l2 4.200l1.600 -0.800l-2 -4.100h3.300z" fill="#fff" stroke="#000" stroke-width="0.800"/>
<path d="M1927 332l4 -5h12l-4 5z" fill="#fff" stroke="#222" stroke-width="1"/><path d="M1939 332l4 -5v11l-4 5z" fill="#fff" stroke="#222" stroke-width="1"/><rect x="1927" y="332" width="12" height="11" fill="#fff" stroke="#222" stroke-width="1"/><path d="M1929.5 335h7M1929.5 338h7M1929.5 341h7" stroke="#333" stroke-width="1" stroke-dasharray="1 1.500"/><path d="M1927 332l4 -5h12v11" fill="none" stroke="#2060d0" stroke-width="1.600"/><path d="M1937 336v9.500l2.300 -2.200l2 4.200l1.600 -0.800l-2 -4.100h3.300z" fill="#fff" stroke="#000" stroke-width="0.800"/>
<path d="M1927 364l4 -5h12l-4 5z" fill="#fff" stroke="#222" stroke-width="1"/><path d="M1939 364l4 -5v11l-4 5z" fill="#fff" stroke="#222" stroke-width="1"/><rect x="1927" y="364" width="12" height="11" fill="#fff" stroke="#222" stroke-width="1"/><path d="M1929.5 367h7M1929.5 370h7M1929.5 373h7" stroke="#333" stroke-width="1" stroke-dasharray="1 1.500"/><rect x="1927" y="364" width="12" height="11" fill="none" stroke="#2060d0" stroke-width="1.800"/><path d="M1937 368v9.500l2.300 -2.200l2 4.200l1.600 -0.800l-2 -4.100h3.300z" fill="#fff" stroke="#000" stroke-width="0.800"/>
<path d="M1927 397l4 -5h12l-4 5z" fill="#fff" stroke="#222" stroke-width="1"/><path d="M1939 397l4 -5v11l-4 5z" fill="#fff" stroke="#222" stroke-width="1"/><rect x="1927" y="397" width="12" height="11" fill="url(#gb)" stroke="#222" stroke-width="1"/><path d="M1937 401v9.500l2.300 -2.200l2 4.200l1.600 -0.800l-2 -4.100h3.300z" fill="#fff" stroke="#000" stroke-width="0.800"/>
<path d="M1927 429l4 -5h12l-4 5z" fill="#fff" stroke="#222" stroke-width="1"/><path d="M1939 429l4 -5v11l-4 5z" fill="#9a9a9a" stroke="#222" stroke-width="1"/><rect x="1927" y="429" width="12" height="11" fill="url(#gb)" stroke="#222" stroke-width="1"/><path d="M1937 433v9.500l2.300 -2.200l2 4.200l1.600 -0.800l-2 -4.100h3.300z" fill="#fff" stroke="#000" stroke-width="0.800"/>
<path d="M1927.500 465v6.500h15v-6.500" fill="none" stroke="#2a6fd0" stroke-width="2"/><path d="M1935 457v7" stroke="#2a6fd0" stroke-width="2"/><path d="M1931 463l4 4.500l4 -4.500z" fill="#2a6fd0"/>
<path d="M1927.500 497v6.500h15v-6.500" fill="none" stroke="#2a6fd0" stroke-width="2"/><path d="M1935 499.5v-7" stroke="#2a6fd0" stroke-width="2"/><path d="M1931 493.5l4 -4.500l4 4.500z" fill="#2a6fd0"/>
<path d="M1927 534l4 -5h12l-4 5z" fill="#fff" stroke="#222" stroke-width="1"/><path d="M1939 534l4 -5v11l-4 5z" fill="#fff" stroke="#222" stroke-width="1"/><rect x="1927" y="534" width="12" height="11" fill="#fff" stroke="#222" stroke-width="1"/><path d="M1937 538v9.500l2.300 -2.200l2 4.200l1.600 -0.800l-2 -4.100h3.300z" fill="#fff" stroke="#000" stroke-width="0.800"/>
<path d="M1927 575l13 -13v13z" fill="none" stroke="#2a9a2a" stroke-width="1.200" stroke-dasharray="1.500 2"/><path d="M1937 570v9.500l2.300 -2.200l2 4.200l1.600 -0.800l-2 -4.100h3.300z" fill="#fff" stroke="#000" stroke-width="0.800"/>
<path d="M1927 606l13 -13v13z" fill="#3aa04a" stroke="#1a5a2a" stroke-width="1.200"/><path d="M1931 604l7 -7v7z" fill="#9ad0a0"/><path d="M1937 601v9.500l2.300 -2.200l2 4.200l1.600 -0.800l-2 -4.100h3.300z" fill="#fff" stroke="#000" stroke-width="0.800"/>
<path d="M1927 638l13 -13v13z" fill="#fff" stroke="#2a9a2a" stroke-width="1.600"/><path d="M1937 633v9.500l2.300 -2.200l2 4.200l1.600 -0.800l-2 -4.100h3.300z" fill="#fff" stroke="#000" stroke-width="0.800"/>
<path d="M1928 656q5 3 1 7t3 8M1941 655q-4 3 -2 6" fill="none" stroke="#2a8a2a" stroke-width="1.400"/><path d="M1936 664v9.500l2.300 -2.200l2 4.200l1.600 -0.800l-2 -4.100h3.300z" fill="#fff" stroke="#000" stroke-width="0.800"/>
<path d="M1927 693l4 -5h12l-4 5z" fill="#fff" stroke="#222" stroke-width="1"/><path d="M1939 693l4 -5v11l-4 5z" fill="#2a7a3a" stroke="#222" stroke-width="1"/><rect x="1927" y="693" width="12" height="11" fill="url(#gg)" stroke="#222" stroke-width="1"/><path d="M1937 697v9.500l2.300 -2.200l2 4.200l1.600 -0.800l-2 -4.100h3.300z" fill="#fff" stroke="#000" stroke-width="0.800"/><path d="M1927 693l4 -5h12l-4 5z" fill="#2a8a4a" stroke="#222" stroke-width="1"/>
<path d="M1927.500 729v6.500h15v-6.500" fill="none" stroke="#2a9a2a" stroke-width="2"/><path d="M1935 721v7" stroke="#2a9a2a" stroke-width="2"/><path d="M1931 727l4 4.500l4 -4.500z" fill="#2a9a2a"/>
<path d="M1927.500 761v6.500h15v-6.500" fill="none" stroke="#2a9a2a" stroke-width="2"/><path d="M1935 763.5v-7" stroke="#2a9a2a" stroke-width="2"/><path d="M1931 757.5l4 -4.500l4 4.500z" fill="#2a9a2a"/>
<path d="M1927.500 793v6.500h15v-6.500" fill="none" stroke="#2a9a2a" stroke-width="2"/><path d="M1932 786v7M1929.500 790.5l2.500 3l2.500 -3" fill="none" stroke="#2a9a2a" stroke-width="1.600"/><path d="M1938.500 794v-7M1936 789l2.500 -3l2.500 3" fill="none" stroke="#2a9a2a" stroke-width="1.600"/>
<circle cx="1935" cy="823.500" r="8.500" fill="#9ab89a"/><circle cx="1935" cy="823.500" r="7" fill="#7fa080"/><rect x="1933.800" y="822" width="2.600" height="6" fill="#fff"/><circle cx="1935" cy="819.500" r="1.500" fill="#fff"/>
<path d="M1935 856.500v16M1927 864.500h16" stroke="#0f8a0f" stroke-width="4"/>
<path d="M1928 896.500h14" stroke="#0f8a0f" stroke-width="3"/>
</svg>
<!-- sec_icons -->
<svg id="vtb" style="position:absolute;left:330px;top:140px" width="790" height="36" viewBox="330 140 790 36">
<rect x="806.500" y="141.500" width="29" height="31" fill="#f79c33" stroke="#b9b9b9"/>
<rect x="838.500" y="141.500" width="29" height="31" fill="#f79c33" stroke="#b9b9b9"/>
<path d="M458.5 143V171" stroke="#9a9a9a" stroke-width="1"/>
<path d="M735.5 143V171" stroke="#9a9a9a" stroke-width="1"/>
<path d="M871.5 143V171" stroke="#9a9a9a" stroke-width="1"/>
<path d="M1039.5 143V171" stroke="#9a9a9a" stroke-width="1"/>
<circle cx="348.500" cy="154.500" r="6.800" fill="#e8e8e8" stroke="#111" stroke-width="1.200"/><rect x="345" y="151" width="7" height="7" fill="#444"/><path d="M353.500 159.500L359.500 165.500" stroke="#8fce8f" stroke-width="3.400" stroke-linecap="round"/><path d="M353.500 159.500L359.500 165.500" stroke="#3a3a3a" stroke-width="1" />
<rect x="374" y="149" width="7" height="6" fill="#555"/><circle cx="383" cy="156.500" r="5" fill="#f4f4f4" stroke="#111" stroke-width="1.100"/><path d="M380.500 156.500h5M383 154v5" stroke="#111" stroke-width="1"/><path d="M386.500 160L391 164.500" stroke="#8fce8f" stroke-width="3.200" stroke-linecap="round"/>
<path d="M401.300 156.400h5l-2.500 2.600z" fill="#222"/>
<path d="M422 148h12l5 5v11l-5 5h-12l-5 -5v-11z" fill="#eaffea" stroke="#22a022" stroke-width="1.300"/><path d="M428 148v21M417 158.500h22M419.500 150.500l17 16M436.500 150.500l-17 16" stroke="#22a022" stroke-width="1.200"/><path d="M428 154.500l4 4l-4 4l-4 -4z" fill="#e03a10"/>
<path d="M445.700 156.400h5l-2.500 2.600z" fill="#222"/>
<path d="M474.5 165V150M472.0 152.5L474.5 149L477.0 152.5M474.5 165H487.5M485.0 162.5L488.5 165L485.0 167.5" fill="none" stroke="#000" stroke-width="1.400"/>
<text x="477.5" y="159.500" font-family="Liberation Sans,sans-serif" font-size="7.500" font-weight="700" fill="#d03010">-X</text>
<path d="M506.5 165V150M504.0 152.5L506.5 149L509.0 152.5M506.5 165H519.5M517.0 162.5L520.5 165L517.0 167.5" fill="none" stroke="#000" stroke-width="1.400"/>
<text x="509.5" y="159.500" font-family="Liberation Sans,sans-serif" font-size="7.500" font-weight="700" fill="#10a010">+X</text>
<path d="M538.5 165V150M536.0 152.5L538.5 149L541.0 152.5M538.5 165H551.5M549.0 162.5L552.5 165L549.0 167.5" fill="none" stroke="#000" stroke-width="1.400"/>
<text x="541.5" y="159.500" font-family="Liberation Sans,sans-serif" font-size="7.500" font-weight="700" fill="#d03010">-Y</text>
<path d="M570.5 165V150M568.0 152.5L570.5 149L573.0 152.5M570.5 165H583.5M581.0 162.5L584.5 165L581.0 167.5" fill="none" stroke="#000" stroke-width="1.400"/>
<text x="573.5" y="159.500" font-family="Liberation Sans,sans-serif" font-size="7.500" font-weight="700" fill="#10a010">+Y</text>
<path d="M602.5 165V150M600.0 152.5L602.5 149L605.0 152.5M602.5 165H615.5M613.0 162.5L616.5 165L613.0 167.5" fill="none" stroke="#000" stroke-width="1.400"/>
<text x="605.5" y="159.500" font-family="Liberation Sans,sans-serif" font-size="7.500" font-weight="700" fill="#d03010">-Z</text>
<path d="M634.5 165V150M632.0 152.5L634.5 149L637.0 152.5M634.5 165H647.5M645.0 162.5L648.5 165L645.0 167.5" fill="none" stroke="#000" stroke-width="1.400"/>
<text x="637.5" y="159.500" font-family="Liberation Sans,sans-serif" font-size="7.500" font-weight="700" fill="#10a010">+Z</text>
<path d="M667 165V151M665 153.500l2 -3l2 3" fill="none" stroke="#000" stroke-width="1.200"/><path d="M667 165L678 151" stroke="#b07818" stroke-width="1.200"/><path d="M667 165L677 166.500" stroke="#10a010" stroke-width="1.200"/>
<text x="670.500" y="153" font-family="Liberation Sans,sans-serif" font-size="6" font-weight="700" fill="#000">Z</text><text x="678" y="152" font-family="Liberation Sans,sans-serif" font-size="6" font-weight="700" fill="#b07818">Y</text><text x="678" y="168" font-family="Liberation Sans,sans-serif" font-size="6" font-weight="700" fill="#10a010">X</text>
<path d="M690.900 156.400h5l-2.500 2.600z" fill="#222"/>
<path d="M707.500 157L716 147.500L725 155.500L716.500 166.500Z" fill="#5aa0e8" stroke="#2a6fc0" stroke-width="1"/><rect x="708" y="157" width="9" height="9" fill="#3ab03a" stroke="#1a6a1a" stroke-width="0.800"/><rect x="710" y="157.500" width="5" height="3" fill="#fff"/><path d="M709 147.500L725 166" stroke="#e02020" stroke-width="0.900" stroke-dasharray="2 1.500"/>
<rect x="750.500" y="148.500" width="11" height="11" fill="none" stroke="#1030d0" stroke-width="1" stroke-dasharray="1.500 1.500"/><circle cx="759" cy="160" r="4.2" fill="#bfe8bf" stroke="#111" stroke-width="1.300"/><path d="M761.94 162.94L767.2 168.2" stroke="#111" stroke-width="2.600" stroke-linecap="round"/>
<path d="M795 149.500H781.500V160H786" fill="none" stroke="#1030d0" stroke-width="1.400"/><circle cx="791" cy="160" r="4.2" fill="#bfe8bf" stroke="#111" stroke-width="1.300"/><path d="M793.94 162.94L799.2 168.2" stroke="#111" stroke-width="2.600" stroke-linecap="round"/>
<rect x="814.500" y="150.500" width="13" height="11" fill="#b8b8f4" stroke="#444" stroke-width="1"/><circle cx="825" cy="161" r="4.2" fill="#bfe8bf" stroke="#111" stroke-width="1.300"/><path d="M827.94 163.94L833.2 169.2" stroke="#111" stroke-width="2.600" stroke-linecap="round"/>
<path d="M846 149.500q4 2.500 0 5.500t2 6q3 1.500 6 -1M860 149.500q-3.500 3 -1 5.500" fill="none" stroke="#1a2a9a" stroke-width="1.400"/><circle cx="857" cy="161" r="4.2" fill="#bfe8bf" stroke="#111" stroke-width="1.300"/><path d="M859.94 163.94L865.2 169.2" stroke="#111" stroke-width="2.600" stroke-linecap="round"/>
<path d="M889.500 148V167M894.500 148V167M899.500 148V167M884.500 152.500H903.500M884.500 157.500H903.500M884.500 162.500H903.500" stroke="#000" stroke-width="1.400"/>
<path d="M921.500 148V167M926.500 148V167M931.500 148V167M917 152.500H935M917 157.500H935M917 162.500H935" stroke="#9a9a9a" stroke-width="1"/><path d="M915.500 156L926 166.500M926 156L915.500 166.500" stroke="#e01010" stroke-width="1.800"/>
<path d="M957 151a5.500 5.500 0 0 1 3 10v3h-6v-3a5.500 5.500 0 0 1 3 -10z" fill="#b8e8b0" stroke="#333" stroke-width="1"/><rect x="954.500" y="164" width="5" height="3" fill="#c8a800" stroke="#333" stroke-width="0.600"/><path d="M957 145.500v3M948.500 149l2.500 2M965.500 149l-2.500 2M946.500 157h3M967.500 157h-3M949 164.500l2 -1.500M965 164.500l-2 -1.500" stroke="#555" stroke-width="0.900"/>
<rect x="979.500" y="149.500" width="5" height="16" fill="#8a8a8a" stroke="#555" stroke-width="0.800"/><rect x="979.500" y="157" width="5" height="8.500" fill="#2aa02a"/><rect x="994.500" y="149.500" width="4.500" height="16" fill="#e8e8e8" stroke="#555" stroke-width="0.800"/><rect x="994.500" y="160" width="4.500" height="5.500" fill="#2aa02a"/><path d="M986.500 153h5l-1.500 -1.500M992.500 161h-5l1.500 1.500" fill="none" stroke="#444" stroke-width="1"/>
<defs><linearGradient id="cl" x1="0" y1="0" x2="0" y2="1"><stop offset="0" stop-color="#2020d0"/><stop offset="0.300" stop-color="#20c0e0"/><stop offset="0.500" stop-color="#30d030"/><stop offset="0.700" stop-color="#f0e020"/><stop offset="1" stop-color="#e02010"/></linearGradient></defs><rect x="1014" y="148.500" width="11" height="17" fill="url(#cl)" stroke="#444" stroke-width="0.800"/><path d="M1027.500 149v17" stroke="#444" stroke-width="1" stroke-dasharray="1 1.300"/>
<path d="M1061 147l9.500 4.500v11l-9.500 5l-9.500 -5v-11z" fill="#9cc0f0" stroke="#6a9ad8" stroke-width="0.800"/><path d="M1061 147l9.500 4.500l-3.300 1.800l-6.200 -3l-6.200 3l-3.300 -1.800z" fill="#c4dcf8"/><path d="M1054.800 153.300l6.200 3.200l6.200 -3.200v3.600l-4.600 2.500v6.400l-1.600 0.900l-1.600 -0.900v-6.400l-4.600 -2.500z" fill="#fff" stroke="#6a9ad8" stroke-width="0.600"/>
<path d="M1093 147l9.500 4.500v11l-9.500 5l-9.500 -5v-11z" fill="#88b4ee"/><path d="M1093 156.500l9.500 -5v11l-9.500 5z" fill="#5f80b8"/><path d="M1093 156.500l-9.500 -5v11l9.500 5z" fill="#8fbaf2"/><path d="M1093 147l9.500 4.500l-9.500 5l-9.500 -5z" fill="#b4d2f8"/>
</svg>
<!-- sec_icons2 -->
<svg id="ribicons" style="position:absolute;left:600px;top:96px" width="1120" height="30" viewBox="600 96 1120 30">
<defs><linearGradient id="cy" x1="0" y1="0" x2="0" y2="1"><stop offset="0" stop-color="#6f86b8"/><stop offset="0.450" stop-color="#e4ebf8"/><stop offset="1" stop-color="#7a90c0"/></linearGradient><linearGradient id="cg" x1="0" y1="0" x2="0" y2="1"><stop offset="0" stop-color="#1f9a4a"/><stop offset="0.450" stop-color="#b8ecc8"/><stop offset="1" stop-color="#1f9a4a"/></linearGradient><linearGradient id="bm" x1="0" y1="0" x2="1" y2="1"><stop offset="0" stop-color="#e8eef8"/><stop offset="1" stop-color="#4a6fb0"/></linearGradient></defs>
<path d="M611 113.500l20 -8q2.500 -0.500 3 2t-1.500 3.500l-20 8q-2.500 0.500 -3 -2t1.500 -3.500z" fill="#b8c8e8" stroke="#44557a" stroke-width="0.800"/><ellipse cx="631.500" cy="108" rx="2.500" ry="2.700" fill="#eef3fc" stroke="#44557a" stroke-width="0.700"/><ellipse cx="612" cy="116.500" rx="2.500" ry="2.700" fill="#eef3fc" stroke="#44557a" stroke-width="0.700"/><path d="M611.500 104.500q3 -1.200 6 0.500l14 9q3 2 2 4.500t-5 1l-15 -8.500q-3.500 -2 -3.500 -4t1.500 -2.500z" fill="#ee9aa0" stroke="#a04850" stroke-width="0.800" stroke-dasharray="1.600 1"/>
<rect x="723.5" y="105" width="24.5" height="12" rx="1.7" ry="6.0" fill="url(#cy)" stroke="#3a3a4a" stroke-width="0.900"/><path d="M726 111h19.500" stroke="#555" stroke-width="0.800" stroke-dasharray="1 1.400"/><path d="M725.500 108v6M745.800 108v6" stroke="#e02030" stroke-width="1.300"/>
<rect x="830.5" y="105" width="24.5" height="12" rx="1.7" ry="6.0" fill="url(#cy)" stroke="#3a3a4a" stroke-width="0.900"/><ellipse cx="838" cy="111" rx="1.800" ry="5.300" fill="none" stroke="#e02030" stroke-width="1.100"/><ellipse cx="843" cy="111" rx="1.800" ry="5.300" fill="none" stroke="#e02030" stroke-width="1.100"/><ellipse cx="848" cy="111" rx="1.800" ry="5.300" fill="none" stroke="#e02030" stroke-width="1.100"/>
<rect x="959.5" y="108.5" width="25" height="11.5" rx="1.7" ry="5.75" fill="url(#cy)" stroke="#3a3a4a" stroke-width="0.900"/><path d="M972 108.500h9.500q3 0 3 5.700t-3 5.800h-9.500z" fill="url(#cg)" stroke="#1a6a2a" stroke-width="0.900" stroke-dasharray="1.500 1.200"/><path d="M980.500 98.500v7M977 102h7" stroke="#0f8a1f" stroke-width="2.200"/>
<rect x="1064.5" y="108.5" width="25" height="11.5" rx="1.7" ry="5.75" fill="url(#cy)" stroke="#3a3a4a" stroke-width="0.900" stroke-dasharray="1.500 1.200"/><path d="M1067 114.200h20" stroke="#555" stroke-width="0.700"/><path d="M1066.300 112v4.500M1087.800 112v4.500" stroke="#e02030" stroke-width="1.200"/><path d="M1085 98.500v7M1081.500 102h7" stroke="#0f8a1f" stroke-width="2.200"/>
<path d="M1139.500 103.500l4 -3h17.500v17.500l-4 3.500h-17.500z" fill="#8a8a8a" stroke="#333" stroke-width="0.900"/><rect x="1139.500" y="103.500" width="17.500" height="18" fill="#c9c9c9" stroke="#333" stroke-width="0.900"/><path d="M1139.500 113q4 -1 8.500 1t9 -2v9.500h-17.500z" fill="#8fb0e4"/><circle cx="1148.500" cy="112.500" r="4.500" fill="#e8e8e8" stroke="#222" stroke-width="1"/><path d="M1145.500 109.500l6 6" stroke="#222" stroke-width="1"/>
<path d="M1234 106l5 -7l4 5l-4 6z" fill="#e05a60" stroke="#a02a30" stroke-width="0.600"/><path d="M1240 112l9 -5l5 1.500l-9 5z" fill="#e0484e" stroke="#a02a30" stroke-width="0.600"/><path d="M1239 116l10 -3.500l4 1l-8 4.500v3h-4z" fill="#3aa85a" stroke="#1a6a2a" stroke-width="0.600"/><path d="M1232 119h8v3.500h-8z" fill="#3aa85a" stroke="#1a6a2a" stroke-width="0.600"/><ellipse cx="1234.500" cy="111.500" rx="3" ry="4.500" transform="rotate(30 1234.500 111.500)" fill="#c8daf4" stroke="#3a4a7a" stroke-width="0.800"/>
<path d="M1359.9 109.8L1359.9 112.2L1356.9 113.7L1356.2 115.4L1357.3 118.6L1355.6 120.3L1352.4 119.2L1350.7 119.9L1349.2 122.9L1346.8 122.9L1345.3 119.9L1343.6 119.2L1340.4 120.3L1338.7 118.6L1339.8 115.4L1339.1 113.7L1336.1 112.2L1336.1 109.8L1339.1 108.3L1339.8 106.6L1338.7 103.4L1340.4 101.7L1343.6 102.8L1345.3 102.1L1346.8 99.1L1349.2 99.1L1350.7 102.1L1352.4 102.8L1355.6 101.7L1357.3 103.4L1356.2 106.6L1356.9 108.3Z" fill="#f79420" stroke="#b06010" stroke-width="0.700" stroke-linejoin="round"/><circle cx="1348" cy="111" r="5.800" fill="#fff" stroke="#b06010" stroke-width="0.700"/><circle cx="1348.500" cy="111" r="3" fill="#8a8a8a"/><rect x="1351.500" y="113.500" width="9" height="8.500" rx="1" fill="#f4f4f4" stroke="#333" stroke-width="0.900"/><path d="M1353 116.500h6M1353 119.500h6" stroke="#333" stroke-width="1"/>
<path d="M1441.500 103l11.500 4l10 13.500" fill="none" stroke="#111" stroke-width="1.400"/><circle cx="1441.500" cy="103" r="1.900" fill="#111"/><circle cx="1453" cy="107" r="1.900" fill="#111"/><circle cx="1463" cy="120.500" r="1.900" fill="#111"/><path d="M1441 121v-12.500" stroke="#2a9ae8" stroke-width="1.300"/><path d="M1441 121h12" stroke="#3ab85a" stroke-width="1.300"/><path d="M1441 121l9 -7" stroke="#e83a4a" stroke-width="1.300"/>
<path d="M1553 105.500h10M1553 109h9" stroke="#555" stroke-width="1.200"/><path d="M1553 112.500h8q4 0 7 3l6 6l4 -3.500l-7 -7q-4 -3.500 -9 -3.500h-9z" fill="url(#bm)" stroke="#4a5a8a" stroke-width="0.600"/><path d="M1571 106.500l7.500 7" stroke="#333" stroke-width="1.300"/><circle cx="1560.500" cy="119.500" r="3.300" fill="#fff" stroke="#333" stroke-width="1.500"/><path d="M1553 116h5M1564 122.500l4 0" stroke="#333" stroke-width="1.300"/>
<path d="M1681 105h10" stroke="#333" stroke-width="1.100"/><path d="M1681 108.500h9q5 0 8 3.500l4 5l3 -2.500l-4.500 -5.500q-4 -4 -10.500 -4h-9z" fill="#2aa860" stroke="#14703a" stroke-width="0.600"/><path d="M1697 103.500q4 1 7 5" fill="none" stroke="#333" stroke-width="1"/><path d="M1695.5 116.8L1695.5 118.2L1693.5 119.0L1693.1 120.0L1693.9 121.9L1692.9 122.9L1691.0 122.1L1690.0 122.5L1689.2 124.5L1687.8 124.5L1687.0 122.5L1686.0 122.1L1684.1 122.9L1683.1 121.9L1683.9 120.0L1683.5 119.0L1681.5 118.2L1681.5 116.8L1683.5 116.0L1683.9 115.0L1683.1 113.1L1684.1 112.1L1686.0 112.9L1687.0 112.5L1687.8 110.5L1689.2 110.5L1690.0 112.5L1691.0 112.9L1692.9 112.1L1693.9 113.1L1693.1 115.0L1693.5 116.0Z" fill="#f79420" stroke="#b06010" stroke-width="0.700" stroke-linejoin="round"/><circle cx="1688.500" cy="117.500" r="3" fill="#fff" stroke="#b06010" stroke-width="0.600"/><circle cx="1688.800" cy="117.500" r="1.500" fill="#8a8a8a"/><rect x="1690.500" y="119" width="5.500" height="5" fill="#f4f4f4" stroke="#333" stroke-width="0.700"/>
</svg>
<!-- sec_icons3 -->
<svg id="bigicons" style="position:absolute;left:20px;top:70px" width="540" height="44" viewBox="20 70 540 44">
<path d="M33.500 80.500h9l6 6v16.500h-15z M42.500 80.500v6h6" fill="none" stroke="#f2efe6" stroke-width="1.500" stroke-linejoin="round"/>
<path d="M86 101.500v-19h7l2 2.500h9.500v4.500" fill="none" stroke="#f2efe6" stroke-width="1.500" stroke-linejoin="round"/><path d="M86 101.500l3.500 -11.500h19l-3.500 11.500z" fill="none" stroke="#f2efe6" stroke-width="1.500" stroke-linejoin="round"/>
<rect x="142.500" y="81.500" width="21" height="21" fill="none" stroke="#f2efe6" stroke-width="1.500"/><path d="M147 81.500v8h12v-8" fill="none" stroke="#f2efe6" stroke-width="1.500"/><rect x="152" y="94" width="2.500" height="4.500" fill="#f2efe6"/>
<defs><linearGradient id="mb" x1="0" x2="1"><stop offset="0" stop-color="#3a6fe0"/><stop offset="1" stop-color="#fff"/></linearGradient></defs>
<rect x="197" y="84.500" width="13" height="6" rx="3" fill="url(#mb)" stroke="#fff" stroke-width="0.800"/><rect x="206.500" y="93.500" width="14" height="6.500" rx="3.200" fill="#9ad8c8" stroke="#fff" stroke-width="0.800"/><path d="M209 93.500v6.500M212 93.500v6.500M215 93.500v6.500M218 93.500v6.500M207 96.800h13" stroke="#2a6a5a" stroke-width="0.600"/><path d="M212.500 85.500q5 0 6 4.500" fill="none" stroke="#f2efe6" stroke-width="1.300"/><path d="M216.300 89l2.600 3l1.300 -3.800z" fill="#f2efe6"/><path d="M198.500 93q0.500 4 5 4.500" fill="none" stroke="#f2efe6" stroke-width="1.300"/><path d="M202.500 95.300l3.400 2.300l-3.600 1.500z" fill="#f2efe6"/>
<text x="265" y="86.800" text-anchor="middle" font-family="Liberation Serif,serif" font-weight="700" font-size="7" fill="#f2efe6">S</text><text x="265" y="93.800" text-anchor="middle" font-family="Liberation Serif,serif" font-weight="700" font-size="7" fill="#f2efe6">P</text><text x="265" y="100.800" text-anchor="middle" font-family="Liberation Serif,serif" font-weight="700" font-size="7" fill="#f2efe6">W</text><path d="M258.500 95v7.500h13v-7.500" fill="none" stroke="#f2efe6" stroke-width="1.300"/><path d="M254 83h5M271 83h5M259.500 83v11M270.500 83v11" stroke="#f2efe6" stroke-width="0.600" stroke-dasharray="1 1.200"/>
<path d="M317.500 80.500h7v5.500l-1.500 3h-4l-1.500 -3z" fill="#d8f0ec" stroke="#8ac8c0" stroke-width="0.500"/><rect x="312.500" y="86" width="3" height="3" fill="#9ad8d0" stroke="#fff" stroke-width="0.600"/><rect x="326.500" y="86" width="3" height="3" fill="#9ad8d0" stroke="#fff" stroke-width="0.600"/><path d="M309.500 91.500h23" stroke="#e8f4f0" stroke-width="1.500"/><path d="M312 94h5.500v5h7v-5h5.500v9h-18z" fill="#8ad0c8" stroke="#e8f4f0" stroke-width="0.700"/>
<rect x="366.500" y="81.500" width="21" height="21" fill="#c9c9c9" stroke="#f2f2f2" stroke-width="1"/><path d="M367 82h20v11.500h-2.500l-2.500 -3h-10l-2.500 3h-2.500z" fill="#47507c"/><path d="M372.500 102v-8.500l2 -3h5.500l2 3v8.500z" fill="#e87a1a"/>
<path d="M452.0 95.9L452.0 97.1L449.8 97.9L449.5 98.8L450.8 100.7L450.1 101.7L447.9 101.1L447.1 101.6L447.1 103.9L445.9 104.3L444.5 102.5L443.5 102.5L442.1 104.3L440.9 103.9L440.9 101.6L440.1 101.1L437.9 101.7L437.2 100.7L438.5 98.8L438.2 97.9L436.0 97.1L436.0 95.9L438.2 95.1L438.5 94.2L437.2 92.3L437.9 91.3L440.1 91.9L440.9 91.4L440.9 89.1L442.1 88.7L443.5 90.5L444.5 90.5L445.9 88.7L447.1 89.1L447.1 91.4L447.9 91.9L450.1 91.3L450.8 92.3L449.5 94.2L449.8 95.1Z" fill="none" stroke="#f2efe6" stroke-width="1"/><circle cx="444" cy="96.500" r="3.600" fill="none" stroke="#f2efe6" stroke-width="0.900"/><circle cx="444" cy="96.500" r="1.300" fill="none" stroke="#f2efe6" stroke-width="0.800"/><path d="M460.0 85.6L460.0 86.4L458.6 87.0L458.4 87.6L459.2 88.9L458.7 89.6L457.2 89.2L456.7 89.6L456.6 91.1L455.8 91.3L454.8 90.2L454.2 90.2L453.2 91.3L452.4 91.1L452.3 89.6L451.8 89.2L450.3 89.6L449.8 88.9L450.6 87.6L450.4 87.0L449.0 86.4L449.0 85.6L450.4 85.0L450.6 84.4L449.8 83.1L450.3 82.4L451.8 82.8L452.3 82.4L452.4 80.9L453.2 80.7L454.2 81.8L454.8 81.8L455.8 80.7L456.6 80.9L456.7 82.4L457.2 82.8L458.7 82.4L459.2 83.1L458.4 84.4L458.6 85.0Z" fill="none" stroke="#3aa8a0" stroke-width="1.100"/><circle cx="454.500" cy="86" r="2.300" fill="none" stroke="#3aa8a0" stroke-width="0.800"/>
<path d="M528 84.500h17.500l-3.500 16h-17.500z" fill="#f4f4f4"/><path d="M530.200 85.200l-3.300 14.600" stroke="#d02a3a" stroke-width="2.200"/><path d="M535.700 85.200l-3.300 14.600" stroke="#2aa04a" stroke-width="2.200"/><path d="M541.200 85.200l-3.300 14.600" stroke="#2050b0" stroke-width="2.200"/>
</svg>
<svg id="sbicons" style="position:absolute;left:105px;top:530px" width="160" height="470" viewBox="105 530 160 470">
<path d="M114 555.5h14" stroke="#222" stroke-width="1"/><path d="M116 553l1.500 -4.500l9 -8.500l3 3l-9 8.500z" fill="#2aa84a" stroke="#222" stroke-width="0.800"/><path d="M116 553l1.500 -4.500l3 3z" fill="#e8e0c8" stroke="#222" stroke-width="0.600"/><path d="M114 555l2 -2" stroke="#d02020" stroke-width="1.200"/>
<rect x="155.5" y="545.5" width="13" height="12" fill="#fff" stroke="#3a8a3a" stroke-width="0.900"/><path d="M158.75 545.5v12M155.5 548.5h13" stroke="#3a8a3a" stroke-width="0.800"/><path d="M162.0 545.5v12M155.5 551.5h13" stroke="#3a8a3a" stroke-width="0.800"/><path d="M165.25 545.5v12M155.5 554.5h13" stroke="#3a8a3a" stroke-width="0.800"/><path d="M164 541h3v5h-3zM168 541h3v5h-3zM166.5 542.5h2" fill="#222" stroke="#222" stroke-width="0.800"/>
<path d="M194 541l17 16" stroke="#222" stroke-width="0.900"/><path d="M192 539l4 4M196 539l-4 4M194 538v6M191 541h6" stroke="#2aaa3a" stroke-width="1"/><path d="M209 555l4 4M213 555l-4 4M211 554v6M208 557h6" stroke="#2aaa3a" stroke-width="1"/><text x="206" y="549" font-family="Liberation Sans,sans-serif" font-size="7" fill="#111">d</text>
<path d="M236.5 544.5h13l-1.500 12.500q-5 2 -10 0z" fill="#eaeaea" stroke="#444" stroke-width="1"/><ellipse cx="243" cy="544.5" rx="6.800" ry="2.300" fill="#f8f8f8" stroke="#444" stroke-width="1"/><path d="M239.5 548l0.800 8M243 548.5v8M246.5 548l-0.800 8" stroke="#666" stroke-width="0.900"/><path d="M241 542l2 -2l2 2" fill="none" stroke="#3aaa4a" stroke-width="1.200"/>
<path d="M114 986.5h14" stroke="#222" stroke-width="1"/><path d="M116 984l1.500 -4.500l9 -8.500l3 3l-9 8.500z" fill="#2a6ad0" stroke="#222" stroke-width="0.800"/><path d="M116 984l1.500 -4.500l3 3z" fill="#e8e0c8" stroke="#222" stroke-width="0.600"/><path d="M114 986l2 -2" stroke="#d02020" stroke-width="1.200"/>
<rect x="155.5" y="976.5" width="13" height="12" fill="#fff" stroke="#3a5ad0" stroke-width="0.900"/><path d="M158.75 976.5v12M155.5 979.5h13" stroke="#3a5ad0" stroke-width="0.800"/><path d="M162.0 976.5v12M155.5 982.5h13" stroke="#3a5ad0" stroke-width="0.800"/><path d="M165.25 976.5v12M155.5 985.5h13" stroke="#3a5ad0" stroke-width="0.800"/><path d="M164 972h3v5h-3zM168 972h3v5h-3zM166.5 973.5h2" fill="#222" stroke="#222" stroke-width="0.800"/>
<defs><radialGradient id="bl" cx="0.350" cy="0.300" r="0.800"><stop offset="0" stop-color="#e8f2ff"/><stop offset="1" stop-color="#4a8ae0"/></radialGradient></defs><circle cx="203" cy="976.500" r="6" fill="url(#bl)" stroke="#2a5aa0" stroke-width="0.800"/><path d="M203 982.500v2M199 985l-2 2.500M207 985l2 2.500" stroke="#444" stroke-width="0.800"/><circle cx="197" cy="989" r="1.800" fill="#e0a020" stroke="#555" stroke-width="0.500"/><circle cx="203" cy="989.500" r="1.800" fill="#3ab04a" stroke="#555" stroke-width="0.500"/><circle cx="209" cy="989" r="1.800" fill="#b040c0" stroke="#555" stroke-width="0.500"/>
<path d="M236.5 975.5h13l-1.500 12.500q-5 2 -10 0z" fill="#eaeaea" stroke="#444" stroke-width="1"/><ellipse cx="243" cy="975.5" rx="6.800" ry="2.300" fill="#f8f8f8" stroke="#444" stroke-width="1"/><path d="M239.5 979l0.800 8M243 979.5v8M246.5 979l-0.800 8" stroke="#666" stroke-width="0.900"/><path d="M241 973l2 -2l2 2" fill="none" stroke="#3aaa4a" stroke-width="1.200"/>
</svg>
</div></body></html>
